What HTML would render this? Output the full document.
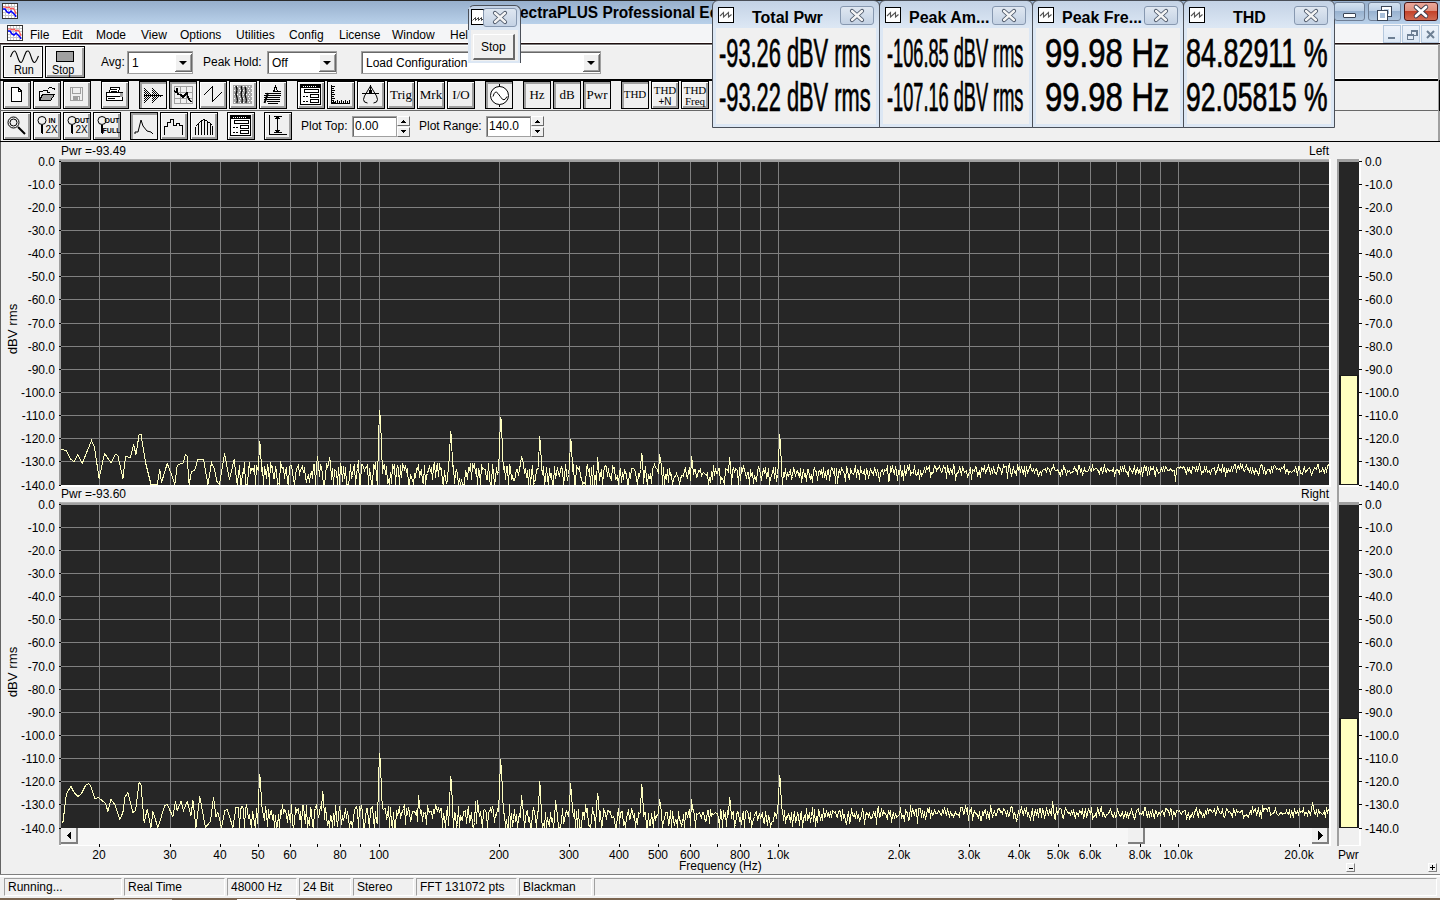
<!DOCTYPE html>
<html><head><meta charset="utf-8">
<style>
*{margin:0;padding:0;box-sizing:border-box}
html,body{width:1440px;height:900px;overflow:hidden;background:#f0f0f0;font-family:"Liberation Sans",sans-serif;font-size:12px;color:#000;position:relative}
.a{position:absolute}
.t{position:absolute;font-size:12px;line-height:14px;white-space:nowrap;color:#000}
.yl{left:0;width:55px;text-align:right}
.ml{left:1365px}
.tick{position:absolute;width:2px;height:1px;background:#000}
.rot{left:-17px;width:60px;text-align:center;transform:rotate(-90deg) scaleX(1.1);transform-origin:50% 50%}
.xl{top:848px;width:80px;text-align:center}
.xt{position:absolute;top:844px;width:1px;height:3px;background:#000}
/* title */
#title{left:0;top:0;width:1440px;height:24px;background:linear-gradient(#97afcc,#b9d1ea);border-top:1px solid #2a2a2a}
#menu{left:0;top:24px;width:1440px;height:22px;background:#f4f5f7;box-shadow:inset 0 -1px 0 #fff,inset 0 -2px 0 #7a7a7a,inset 0 -3px 0 #201010,inset 0 -4px 0 #fff}
.mi{position:absolute;top:28px;font-size:12px;line-height:14px;color:#000}
/* toolbar */
.btn{position:absolute;width:28px;height:28px;border:1px solid #000;background:#f0f0f0;box-shadow:inset 1px 1px 0 #fff,inset -1px -1px 0 #a0a0a0,inset -2px -2px 0 #a0a0a0}
.btn.dn{box-shadow:inset 1px 1px 0 #a0a0a0,inset 2px 2px 0 #a0a0a0}
.btn svg{position:absolute;left:-1px;top:-1px}
.sep{position:absolute;left:0;height:1px;background:#000}
.combo{position:absolute;background:#fff;border:1px solid #a0a0a0;box-shadow:inset 1px 1px 0 #696969}
.dd{position:absolute;width:17px;height:18px;background:#f0f0f0;border-right:1px solid #696969;border-bottom:1px solid #696969;box-shadow:inset 1px 1px 0 #fff,inset -1px -1px 0 #a0a0a0}
.dd:after{content:"";position:absolute;left:4px;top:7px;border-left:4px solid transparent;border-right:4px solid transparent;border-top:4px solid #000}
.tb{font-family:"Liberation Serif",serif;font-size:13px;line-height:14px;text-align:center;width:26px;position:absolute;left:0;top:6px}
/* meter windows */
.mw{position:absolute;top:0;height:128px;border:1px solid #4a4f58;border-top-left-radius:6px;border-top-right-radius:6px;background:linear-gradient(#c3d2e5,#dce7f4 26px,#dce7f4)}
.mw .cont{position:absolute;left:3px;top:27px;right:3px;bottom:3px;background:#f0f0f0}
.mw .ico{position:absolute;left:5px;top:6px;width:16px;height:16px;background:#fff;border:1px solid #000}
.mw .ttl{position:absolute;top:8px;font-weight:bold;font-size:16px;line-height:18px}
.mw .cls{position:absolute;top:5px;width:34px;height:19px;border:1px solid #8798b0;border-radius:3px;background:linear-gradient(#dfe7f1,#c4d2e4)}
.zz{position:absolute;left:0;top:0}
.mv{position:absolute;font-size:40px;line-height:40px;transform-origin:0 0;white-space:nowrap;-webkit-text-stroke:0.7px #000}
.spin{width:13px;height:21px;background:#f0f0f0}
.spin:before{content:"";position:absolute;left:0;top:0;width:13px;height:10px;box-sizing:border-box;border-top:1px solid #fff;border-left:1px solid #fff;border-right:1px solid #696969;border-bottom:1px solid #696969}
.spin:after{content:"";position:absolute;left:0;top:11px;width:13px;height:10px;box-sizing:border-box;border-top:1px solid #fff;border-left:1px solid #fff;border-right:1px solid #696969;border-bottom:1px solid #696969}
.sp{position:absolute;border-top:1px solid #a0a0a0;border-left:1px solid #a0a0a0;border-bottom:1px solid #fff;border-right:1px solid #fff;height:18px;top:878px}
.sp span{position:absolute;left:3px;top:1px;font-size:12px;line-height:14px}
</style></head><body>

<!-- Title bar -->
<div id="title" class="a"></div>
<svg class="a" style="left:2px;top:3px" width="16" height="16" shape-rendering="crispEdges"><rect x="0.5" y="0.5" width="15" height="15" fill="#fff" stroke="#333"/><path d="M3.5 1v14M6.5 1v14M9.5 1v14M12.5 1v14M1 3.5h14M1 6.5h14M1 9.5h14M1 12.5h14" stroke="#c8c8c8"/><polyline points="1,4 4,4 5,5 7,4 9,6 11,5 13,8 14,11" fill="none" stroke="#ff5050" stroke-width="1.2" shape-rendering="auto"/><polyline points="1,6 3,6 5,9 7,10 9,8 11,10 13,12 14,14" fill="none" stroke="#0000ff" stroke-width="1.5" shape-rendering="auto"/></svg>
<div class="a" style="left:520px;top:4px;font-weight:bold;font-size:16px;line-height:18px;white-space:nowrap;transform:scaleX(0.965);transform-origin:0 0;color:#000">ectraPLUS Professional Edition</div>

<!-- Menu -->
<div id="menu" class="a"></div>
<svg class="a" style="left:7px;top:25px" width="16" height="16" shape-rendering="crispEdges"><rect x="0.5" y="0.5" width="15" height="15" fill="#fff" stroke="#333"/><path d="M3.5 1v14M6.5 1v14M9.5 1v14M12.5 1v14M1 3.5h14M1 6.5h14M1 9.5h14M1 12.5h14" stroke="#c8c8c8"/><polyline points="1,4 4,4 5,5 7,4 9,6 11,5 13,8 14,11" fill="none" stroke="#ff5050" stroke-width="1.2" shape-rendering="auto"/><polyline points="1,6 3,6 5,9 7,10 9,8 11,10 13,12 14,14" fill="none" stroke="#0000ff" stroke-width="1.5" shape-rendering="auto"/></svg>
<div class="mi" style="left:30px">File</div>
<div class="mi" style="left:62px">Edit</div>
<div class="mi" style="left:96px">Mode</div>
<div class="mi" style="left:141px">View</div>
<div class="mi" style="left:180px">Options</div>
<div class="mi" style="left:236px">Utilities</div>
<div class="mi" style="left:289px">Config</div>
<div class="mi" style="left:339px">License</div>
<div class="mi" style="left:392px">Window</div>
<div class="mi" style="left:450px">Help</div>

<!-- toolbar rows -->
<div class="a" style="left:0;top:44px;width:1px;height:98px;background:#5a5a5a"></div>
<div class="sep" style="top:79px;width:1440px;height:2px"></div><div class="sep" style="top:78px;left:1334px;width:106px;background:#fff"></div>
<div class="sep" style="top:110px;width:1440px;background:#696969"></div><div class="a" style="left:1438px;top:44px;width:2px;height:98px;background:#a0a0a0"></div><div class="a" style="left:1439px;top:80px;width:1px;height:31px;background:#000"></div>
<div class="sep" style="top:141px;width:1440px;height:1px"></div>

<!-- row1 -->
<div class="btn" style="left:3px;top:46px;width:40px;height:32px;box-shadow:inset -1px -1px 0 #fff,inset 1px 1px 0 #fff"></div>
<div class="btn" style="left:45px;top:46px;width:40px;height:32px"></div>
<div class="t" style="left:14px;top:63px;font-size:12px;transform:scaleX(0.9);transform-origin:0 0"><u style="text-decoration:none;border-bottom:1px solid #000">R</u>un</div>
<div class="t" style="left:52px;top:63px;font-size:12px;transform:scaleX(0.9);transform-origin:0 0"><u style="text-decoration:none;border-bottom:1px solid #000">S</u>top</div>
<div class="a" style="left:56px;top:51px;width:18px;height:11px;background:#a0a0a0;border:1px solid #000"></div>
<svg class="a" style="left:0;top:44px" width="50" height="30"><path d="M10.5 13C12 9 13 7 14.5 7S17 11 18 14 19.5 18.5 21 18.5 23.5 14 25 10.5 26.5 7 28 7 30.5 11 31.5 14 33 18.5 34.5 18.5 37 15 38.5 12" fill="none" stroke="#000" stroke-width="1.1"/></svg>

<div class="t" style="left:101px;top:55px">Avg:</div>
<div class="combo" style="left:127px;top:51px;width:66px;height:23px"><span class="t" style="left:4px;top:4px">1</span><div class="dd" style="left:47px;top:2px"></div></div>
<div class="t" style="left:203px;top:55px">Peak Hold:</div>
<div class="combo" style="left:267px;top:51px;width:70px;height:23px"><span class="t" style="left:4px;top:4px">Off</span><div class="dd" style="left:51px;top:2px"></div></div>
<div class="combo" style="left:361px;top:51px;width:240px;height:23px"><span class="t" style="left:4px;top:4px">Load Configuration</span><div class="dd" style="left:221px;top:2px"></div></div>

<!-- row2 buttons -->
<div class="btn" style="left:3px;top:81px"><svg width="28" height="28" style="position:absolute;left:-1px;top:-1px" shape-rendering="crispEdges"><path d="M8.5 6.5h6.5l3.5 3.5v10.5h-10z" fill="#fff" stroke="#000"/><path d="M15 6.5v3.5h3.5" fill="none" stroke="#000"/></svg></div>
<div class="btn" style="left:33px;top:81px"><svg width="28" height="28" style="position:absolute;left:-1px;top:-1px" shape-rendering="crispEdges"><path d="M6.5 19.5v-9h3l1-1h4v2h2" fill="none" stroke="#000"/><path d="M6.5 19.5l3-6h12l-4 6z" fill="#a0a0a0" stroke="#000"/><path d="M14.5 8.5q3-4 6 0" fill="none" stroke="#000"/><path d="M19 7h3v3z" fill="#000"/></svg></div>
<div class="btn" style="left:63px;top:81px"><svg width="28" height="28" style="position:absolute;left:-1px;top:-1px" shape-rendering="crispEdges"><path d="M7.5 6.5h12v13h-12z" fill="none" stroke="#a0a0a0"/><rect x="9.5" y="6.5" width="8" height="6" fill="none" stroke="#a0a0a0"/><rect x="10" y="15" width="7" height="5" fill="#a0a0a0"/><rect x="15" y="16" width="1" height="3" fill="#f0f0f0"/></svg></div>
<div class="btn" style="left:101px;top:81px"><svg width="28" height="28" style="position:absolute;left:-1px;top:-1px" shape-rendering="crispEdges"><path d="M9.5 6.5h9l-1 5h-9z" fill="#fff" stroke="#000"/><path d="M10 8.5h6M10 10h6" stroke="#000"/><rect x="5.5" y="11.5" width="16" height="4" rx="1" fill="#fff" stroke="#000"/><rect x="5.5" y="15.5" width="16" height="4" rx="1" fill="#fff" stroke="#000"/><path d="M7 17.5h7" stroke="#000"/><rect x="19" y="12" width="3" height="4" fill="#a0a0a0"/></svg></div>
<div class="btn dn" style="left:139px;top:81px"><svg width="28" height="28" style="position:absolute;left:-1px;top:-1px" shape-rendering="crispEdges"><rect x="5" y="7" width="1" height="1" fill="#000"/><rect x="13" y="7" width="1" height="1" fill="#000"/><rect x="6" y="8" width="1" height="1" fill="#000"/><rect x="14" y="8" width="1" height="1" fill="#000"/><rect x="5" y="9" width="1" height="1" fill="#000"/><rect x="7" y="9" width="1" height="1" fill="#000"/><rect x="13" y="9" width="1" height="1" fill="#000"/><rect x="15" y="9" width="1" height="1" fill="#000"/><rect x="6" y="10" width="1" height="1" fill="#000"/><rect x="8" y="10" width="1" height="1" fill="#000"/><rect x="14" y="10" width="1" height="1" fill="#000"/><rect x="16" y="10" width="1" height="1" fill="#000"/><rect x="5" y="11" width="1" height="1" fill="#000"/><rect x="7" y="11" width="1" height="1" fill="#000"/><rect x="9" y="11" width="1" height="1" fill="#000"/><rect x="13" y="11" width="1" height="1" fill="#000"/><rect x="15" y="11" width="1" height="1" fill="#000"/><rect x="17" y="11" width="1" height="1" fill="#000"/><rect x="6" y="12" width="1" height="1" fill="#000"/><rect x="8" y="12" width="1" height="1" fill="#000"/><rect x="10" y="12" width="1" height="1" fill="#000"/><rect x="14" y="12" width="1" height="1" fill="#000"/><rect x="16" y="12" width="1" height="1" fill="#000"/><rect x="18" y="12" width="1" height="1" fill="#000"/><rect x="5" y="13" width="1" height="1" fill="#000"/><rect x="7" y="13" width="1" height="1" fill="#000"/><rect x="9" y="13" width="1" height="1" fill="#000"/><rect x="11" y="13" width="1" height="1" fill="#000"/><rect x="13" y="13" width="1" height="1" fill="#000"/><rect x="15" y="13" width="1" height="1" fill="#000"/><rect x="17" y="13" width="1" height="1" fill="#000"/><rect x="19" y="13" width="1" height="1" fill="#000"/><rect x="6" y="14" width="1" height="1" fill="#000"/><rect x="8" y="14" width="1" height="1" fill="#000"/><rect x="10" y="14" width="1" height="1" fill="#000"/><rect x="12" y="14" width="1" height="1" fill="#000"/><rect x="14" y="14" width="1" height="1" fill="#000"/><rect x="16" y="14" width="1" height="1" fill="#000"/><rect x="18" y="14" width="1" height="1" fill="#000"/><rect x="20" y="14" width="1" height="1" fill="#000"/><rect x="5" y="15" width="1" height="1" fill="#000"/><rect x="7" y="15" width="1" height="1" fill="#000"/><rect x="9" y="15" width="1" height="1" fill="#000"/><rect x="11" y="15" width="1" height="1" fill="#000"/><rect x="13" y="15" width="1" height="1" fill="#000"/><rect x="15" y="15" width="1" height="1" fill="#000"/><rect x="17" y="15" width="1" height="1" fill="#000"/><rect x="19" y="15" width="1" height="1" fill="#000"/><rect x="21" y="15" width="1" height="1" fill="#000"/><rect x="6" y="16" width="1" height="1" fill="#000"/><rect x="8" y="16" width="1" height="1" fill="#000"/><rect x="10" y="16" width="1" height="1" fill="#000"/><rect x="14" y="16" width="1" height="1" fill="#000"/><rect x="16" y="16" width="1" height="1" fill="#000"/><rect x="18" y="16" width="1" height="1" fill="#000"/><rect x="5" y="17" width="1" height="1" fill="#000"/><rect x="7" y="17" width="1" height="1" fill="#000"/><rect x="9" y="17" width="1" height="1" fill="#000"/><rect x="13" y="17" width="1" height="1" fill="#000"/><rect x="15" y="17" width="1" height="1" fill="#000"/><rect x="17" y="17" width="1" height="1" fill="#000"/><rect x="6" y="18" width="1" height="1" fill="#000"/><rect x="8" y="18" width="1" height="1" fill="#000"/><rect x="14" y="18" width="1" height="1" fill="#000"/><rect x="16" y="18" width="1" height="1" fill="#000"/><rect x="5" y="19" width="1" height="1" fill="#000"/><rect x="7" y="19" width="1" height="1" fill="#000"/><rect x="13" y="19" width="1" height="1" fill="#000"/><rect x="15" y="19" width="1" height="1" fill="#000"/><rect x="6" y="20" width="1" height="1" fill="#000"/><rect x="14" y="20" width="1" height="1" fill="#000"/><rect x="5" y="21" width="1" height="1" fill="#000"/><rect x="13" y="21" width="1" height="1" fill="#000"/><path d="M5 14.5h19" stroke="#000"/></svg></div>
<div class="btn dn" style="left:169px;top:81px"><svg width="28" height="28" style="position:absolute;left:-1px;top:-1px" shape-rendering="crispEdges"><rect x="5.5" y="5.5" width="18" height="17" fill="none" stroke="#a0a0a0"/><path d="M11.5 5.5v17M17.5 5.5v17M5.5 11.5h18M5.5 17.5h18" stroke="#a0a0a0"/><polyline points="5,10 7,11 8,8 9,13 12,14 14,16 16,14 18,12 19,16 20,18 22,21" fill="none" stroke="#000" stroke-width="1.5"/></svg></div>
<div class="btn" style="left:199px;top:81px"><svg width="28" height="28" style="position:absolute;left:-1px;top:-1px" shape-rendering="crispEdges"><polyline points="4.5,14.5 13.5,5.5 13.5,20.5 22.5,11.5" fill="none" stroke="#000" stroke-width="1"/></svg></div>
<div class="btn" style="left:229px;top:81px"><svg width="28" height="28" style="position:absolute;left:-1px;top:-1px" shape-rendering="crispEdges"><rect x="4" y="4" width="19" height="19" fill="#a8a8a8"/><rect x="5" y="5" width="1" height="1" fill="#fff"/><rect x="8" y="5" width="1" height="1" fill="#fff"/><rect x="11" y="5" width="1" height="1" fill="#fff"/><rect x="14" y="5" width="1" height="1" fill="#fff"/><rect x="17" y="5" width="1" height="1" fill="#fff"/><rect x="20" y="5" width="1" height="1" fill="#fff"/><rect x="7" y="7" width="1" height="1" fill="#fff"/><rect x="10" y="7" width="1" height="1" fill="#fff"/><rect x="13" y="7" width="1" height="1" fill="#fff"/><rect x="16" y="7" width="1" height="1" fill="#fff"/><rect x="19" y="7" width="1" height="1" fill="#fff"/><rect x="22" y="7" width="1" height="1" fill="#fff"/><rect x="5" y="9" width="1" height="1" fill="#fff"/><rect x="8" y="9" width="1" height="1" fill="#fff"/><rect x="11" y="9" width="1" height="1" fill="#fff"/><rect x="14" y="9" width="1" height="1" fill="#fff"/><rect x="17" y="9" width="1" height="1" fill="#fff"/><rect x="20" y="9" width="1" height="1" fill="#fff"/><rect x="7" y="11" width="1" height="1" fill="#fff"/><rect x="10" y="11" width="1" height="1" fill="#fff"/><rect x="13" y="11" width="1" height="1" fill="#fff"/><rect x="16" y="11" width="1" height="1" fill="#fff"/><rect x="19" y="11" width="1" height="1" fill="#fff"/><rect x="22" y="11" width="1" height="1" fill="#fff"/><rect x="5" y="13" width="1" height="1" fill="#fff"/><rect x="8" y="13" width="1" height="1" fill="#fff"/><rect x="11" y="13" width="1" height="1" fill="#fff"/><rect x="14" y="13" width="1" height="1" fill="#fff"/><rect x="17" y="13" width="1" height="1" fill="#fff"/><rect x="20" y="13" width="1" height="1" fill="#fff"/><rect x="7" y="15" width="1" height="1" fill="#fff"/><rect x="10" y="15" width="1" height="1" fill="#fff"/><rect x="13" y="15" width="1" height="1" fill="#fff"/><rect x="16" y="15" width="1" height="1" fill="#fff"/><rect x="19" y="15" width="1" height="1" fill="#fff"/><rect x="22" y="15" width="1" height="1" fill="#fff"/><rect x="5" y="17" width="1" height="1" fill="#fff"/><rect x="8" y="17" width="1" height="1" fill="#fff"/><rect x="11" y="17" width="1" height="1" fill="#fff"/><rect x="14" y="17" width="1" height="1" fill="#fff"/><rect x="17" y="17" width="1" height="1" fill="#fff"/><rect x="20" y="17" width="1" height="1" fill="#fff"/><rect x="7" y="19" width="1" height="1" fill="#fff"/><rect x="10" y="19" width="1" height="1" fill="#fff"/><rect x="13" y="19" width="1" height="1" fill="#fff"/><rect x="16" y="19" width="1" height="1" fill="#fff"/><rect x="19" y="19" width="1" height="1" fill="#fff"/><rect x="22" y="19" width="1" height="1" fill="#fff"/><rect x="5" y="21" width="1" height="1" fill="#fff"/><rect x="8" y="21" width="1" height="1" fill="#fff"/><rect x="11" y="21" width="1" height="1" fill="#fff"/><rect x="14" y="21" width="1" height="1" fill="#fff"/><rect x="17" y="21" width="1" height="1" fill="#fff"/><rect x="20" y="21" width="1" height="1" fill="#fff"/><path d="M7 5q2 4 0 8q2 5 1 9M12 5q2 4 0 8q2 5 1 9M16 6q2 4 0 8q2 4 1 8" fill="none" stroke="#000" stroke-width="1.3" shape-rendering="auto"/></svg></div>
<div class="btn" style="left:259px;top:81px"><svg width="28" height="28" style="position:absolute;left:-1px;top:-1px" shape-rendering="crispEdges"><path d="M15 10.5h7M6 12.5h16M5 14.5h17M5 16.5h16M5 18.5h16M8 20.5h13M9 22.5h10" stroke="#000"/><polyline points="14.5,11 16.5,5 18.5,10.5" fill="none" stroke="#000"/><path d="M9 12L5.5 22" stroke="#000" stroke-width="2" shape-rendering="auto"/></svg></div>
<div class="btn" style="left:297px;top:81px"><svg width="28" height="28" style="position:absolute;left:-1px;top:-1px" shape-rendering="crispEdges"><rect x="3.5" y="3.5" width="20" height="20" fill="#fff" stroke="#000"/><rect x="4" y="4" width="19" height="3" fill="#000"/><path d="M6 5.5h13" stroke="#fff" stroke-dasharray="1 1"/><rect x="7.5" y="8.5" width="14" height="3" fill="none" stroke="#000"/><rect x="13.5" y="13.5" width="8" height="3" fill="none" stroke="#000"/><rect x="13.5" y="18.5" width="8" height="3" fill="none" stroke="#000"/><path d="M6 15h2M9 15h2M6 20h2M9 20h2" stroke="#000"/></svg></div>
<div class="btn" style="left:327px;top:81px"><svg width="28" height="28" style="position:absolute;left:-1px;top:-1px" shape-rendering="crispEdges"><path d="M4.5 4v18.5h18" fill="none" stroke="#000"/><path d="M5 5.5h3" stroke="#000"/><path d="M5 7.5h2" stroke="#000"/><path d="M5 9.5h3" stroke="#000"/><path d="M5 11.5h2" stroke="#000"/><path d="M5 13.5h3" stroke="#000"/><path d="M5 15.5h2" stroke="#000"/><path d="M5 17.5h3" stroke="#000"/><path d="M5 19.5h2" stroke="#000"/><path d="M5 21.5h3" stroke="#000"/><path d="M6.5 22v-3" stroke="#000"/><path d="M8.5 22v-2" stroke="#000"/><path d="M10.5 22v-3" stroke="#000"/><path d="M12.5 22v-2" stroke="#000"/><path d="M14.5 22v-3" stroke="#000"/><path d="M16.5 22v-2" stroke="#000"/><path d="M18.5 22v-3" stroke="#000"/><path d="M20.5 22v-2" stroke="#000"/><path d="M22.5 22v-3" stroke="#000"/></svg></div>
<div class="btn" style="left:357px;top:81px"><svg width="28" height="28" style="position:absolute;left:-1px;top:-1px" shape-rendering="crispEdges"><path d="M13.5 3.5v9M5 12.5h17" stroke="#000" fill="none"/><path d="M13.5 5l-6 10q-2 4 0 6l3 1M13.5 5l6 10q2 4 0 6l-3 1" fill="none" stroke="#000" shape-rendering="auto"/><rect x="12" y="9" width="3" height="3" fill="#000"/></svg></div>
<div class="btn" style="left:387px;top:81px"></div>
<div class="btn" style="left:417px;top:81px"></div>
<div class="btn" style="left:447px;top:81px"></div>
<div class="btn dn" style="left:485px;top:81px"><svg width="28" height="28" style="position:absolute;left:-1px;top:-1px" shape-rendering="crispEdges"><circle cx="14.5" cy="14.5" r="9" fill="#fff" stroke="#000" shape-rendering="auto"/><path d="M14.5 3v2.5M14.5 23.5v2.5" stroke="#000"/><path d="M8 15.5q2-7 5-3t3 4q3 5 6-1" fill="none" stroke="#000" shape-rendering="auto"/></svg></div>
<div class="btn dn" style="left:523px;top:81px"></div>
<div class="btn dn" style="left:553px;top:81px"></div>
<div class="btn dn" style="left:583px;top:81px"></div>
<div class="btn dn" style="left:621px;top:81px"></div>
<div class="btn" style="left:651px;top:81px"></div>
<div class="btn" style="left:681px;top:81px"></div>
<div class="a" style="left:387px;top:81px;width:28px;height:28px;font-family:'Liberation Serif',serif;font-size:13px;line-height:13px;text-align:center;padding-top:7px;white-space:nowrap">Trig</div>
<div class="a" style="left:417px;top:81px;width:28px;height:28px;font-family:'Liberation Serif',serif;font-size:13px;line-height:13px;text-align:center;padding-top:7px;white-space:nowrap">Mrk</div>
<div class="a" style="left:447px;top:81px;width:28px;height:28px;font-family:'Liberation Serif',serif;font-size:13px;line-height:13px;text-align:center;padding-top:7px;white-space:nowrap">I/O</div>
<div class="a" style="left:523px;top:81px;width:28px;height:28px;font-family:'Liberation Serif',serif;font-size:13px;line-height:13px;text-align:center;padding-top:7px;white-space:nowrap">Hz</div>
<div class="a" style="left:553px;top:81px;width:28px;height:28px;font-family:'Liberation Serif',serif;font-size:13px;line-height:13px;text-align:center;padding-top:7px;white-space:nowrap">dB</div>
<div class="a" style="left:583px;top:81px;width:28px;height:28px;font-family:'Liberation Serif',serif;font-size:13px;line-height:13px;text-align:center;padding-top:7px;white-space:nowrap">Pwr</div>
<div class="a" style="left:621px;top:81px;width:28px;height:28px;font-family:'Liberation Serif',serif;font-size:11px;line-height:11px;text-align:center;padding-top:8px;white-space:nowrap">THD</div>
<div class="a" style="left:651px;top:81px;width:28px;height:28px;font-family:'Liberation Serif',serif;font-size:11px;line-height:11px;text-align:center;padding-top:4px;white-space:nowrap">THD<br><span style='font-family:"Liberation Sans",sans-serif;font-size:10px'>+N</span></div>
<div class="a" style="left:681px;top:81px;width:28px;height:28px;font-family:'Liberation Serif',serif;font-size:11px;line-height:11px;text-align:center;padding-top:4px;white-space:nowrap">THD<br>Freq</div>
<!-- row3 -->
<div class="btn" style="left:3px;top:112px"><svg width="28" height="28" style="position:absolute;left:-1px;top:-1px" shape-rendering="crispEdges"><circle cx="10.5" cy="10.5" r="5.5" fill="none" stroke="#000" shape-rendering="auto"/><circle cx="10.5" cy="10.5" r="3.5" fill="none" stroke="#000" shape-rendering="auto"/><path d="M15 15l7 7" stroke="#000" stroke-width="2" shape-rendering="auto"/></svg></div>
<div class="btn" style="left:33px;top:112px"><svg width="28" height="28" style="position:absolute;left:-1px;top:-1px" shape-rendering="crispEdges"><circle cx="9" cy="8.5" r="4" fill="none" stroke="#000" shape-rendering="auto"/><path d="M8 13v8l1 1 1-1v-8z" fill="#000"/><text x="19" y="11" font-family="Liberation Sans" font-size="7" font-weight="bold" text-anchor="middle">IN</text><text x="18.5" y="21" font-family="Liberation Sans" font-size="10" text-anchor="middle" font-weight="normal">2X</text></svg></div>
<div class="btn" style="left:63px;top:112px"><svg width="28" height="28" style="position:absolute;left:-1px;top:-1px" shape-rendering="crispEdges"><circle cx="9" cy="8.5" r="4" fill="none" stroke="#000" shape-rendering="auto"/><path d="M8 13v8l1 1 1-1v-8z" fill="#000"/><text x="19" y="11" font-family="Liberation Sans" font-size="7" font-weight="bold" text-anchor="middle">OUT</text><text x="18.5" y="21" font-family="Liberation Sans" font-size="10" text-anchor="middle" font-weight="normal">2X</text></svg></div>
<div class="btn" style="left:93px;top:112px"><svg width="28" height="28" style="position:absolute;left:-1px;top:-1px" shape-rendering="crispEdges"><circle cx="9" cy="8.5" r="4" fill="none" stroke="#000" shape-rendering="auto"/><path d="M8 13v8l1 1 1-1v-8z" fill="#000"/><text x="19" y="11" font-family="Liberation Sans" font-size="7" font-weight="bold" text-anchor="middle">OUT</text><text x="18.5" y="21" font-family="Liberation Sans" font-size="7" text-anchor="middle" font-weight="bold">FULL</text></svg></div>
<div class="btn dn" style="left:130px;top:112px"><svg width="28" height="28" style="position:absolute;left:-1px;top:-1px" shape-rendering="crispEdges"><polyline points="5,22 5,20 8,20 11,8 13,14 17,19 21,20 23,22" fill="none" stroke="#000" stroke-width="1" shape-rendering="auto"/></svg></div>
<div class="btn" style="left:160px;top:112px"><svg width="28" height="28" style="position:absolute;left:-1px;top:-1px" shape-rendering="crispEdges"><polyline points="4.5,22.5 4.5,14.5 7.5,14.5 7.5,10.5 10.5,10.5 10.5,7.5 13.5,7.5 13.5,13.5 16.5,13.5 16.5,11.5 19.5,11.5 19.5,13.5 22.5,13.5 22.5,22.5" fill="none" stroke="#000"/></svg></div>
<div class="btn" style="left:190px;top:112px"><svg width="28" height="28" style="position:absolute;left:-1px;top:-1px" shape-rendering="crispEdges"><path d="M5.5 22.5V14.5" stroke="#000"/><path d="M8.5 22.5V11.5" stroke="#000"/><path d="M11.5 22.5V8.5" stroke="#000"/><path d="M14.5 22.5V7.5" stroke="#000"/><path d="M17.5 22.5V9.5" stroke="#000"/><path d="M20.5 22.5V11.5" stroke="#000"/><path d="M22.5 22.5V13.5" stroke="#000"/><polyline points="5.5,14.5 8.5,11.5 11.5,8.5 14.5,7.5 17.5,9.5 20.5,11.5 22.5,13.5" fill="none" stroke="#000"/></svg></div>
<div class="btn" style="left:227px;top:112px"><svg width="28" height="28" style="position:absolute;left:-1px;top:-1px" shape-rendering="crispEdges"><rect x="3.5" y="3.5" width="20" height="20" fill="#fff" stroke="#000"/><rect x="4" y="4" width="19" height="3" fill="#000"/><path d="M6 5.5h13" stroke="#fff" stroke-dasharray="1 1"/><rect x="7.5" y="8.5" width="14" height="3" fill="none" stroke="#000"/><rect x="13.5" y="13.5" width="8" height="3" fill="none" stroke="#000"/><rect x="13.5" y="18.5" width="8" height="3" fill="none" stroke="#000"/><path d="M6 15h2M9 15h2M6 20h2M9 20h2" stroke="#000"/></svg></div>
<div class="btn" style="left:264px;top:112px"><svg width="28" height="28" style="position:absolute;left:-1px;top:-1px" shape-rendering="crispEdges"><path d="M5.5 3v19.5h17" fill="none" stroke="#000"/><path d="M10 4.5h8M10 20.5h8M13.5 5v15" stroke="#000"/><path d="M11 7l2.5-3 2.5 3zM11 18l2.5 3 2.5-3z" fill="#000"/></svg></div>

<div class="t" style="left:301px;top:119px">Plot Top:</div>
<div class="combo" style="left:352px;top:116px;width:45px;height:21px"><span class="t" style="left:2px;top:2px">0.00</span></div>
<div class="a spin" style="left:397px;top:116px"></div>
<div class="t" style="left:419px;top:119px">Plot Range:</div>
<div class="combo" style="left:486px;top:116px;width:45px;height:21px"><span class="t" style="left:2px;top:2px">140.0</span></div>
<div class="a spin" style="left:531px;top:116px"></div>

<!-- Plot area frame -->
<div class="a" style="left:0;top:142px;width:1px;height:733px;background:#646464"></div>

<svg class="a" style="left:0;top:0" width="1440" height="900" shape-rendering="crispEdges">
<!-- upper borders -->
<rect x="59" y="159" width="1272" height="3" fill="#a0a0a0"/>
<rect x="59" y="159" width="1272" height="1" fill="#b4b4b4"/>
<rect x="59" y="159" width="2" height="327" fill="#a0a0a0"/>
<rect x="1329" y="159" width="2" height="328" fill="#fff"/>
<rect x="59" y="485" width="1272" height="2" fill="#fff"/>
<rect x="59" y="502" width="1272" height="3" fill="#a0a0a0"/>
<rect x="59" y="502" width="1272" height="1" fill="#b4b4b4"/>
<rect x="59" y="502" width="2" height="344" fill="#a0a0a0"/>
<rect x="1329" y="502" width="2" height="344" fill="#fff"/>
<rect x="61" y="162" width="1268" height="323" fill="#262626"/>
<rect x="61" y="184" width="1268" height="1" fill="#808080"/>
<rect x="61" y="207" width="1268" height="1" fill="#808080"/>
<rect x="61" y="230" width="1268" height="1" fill="#808080"/>
<rect x="61" y="253" width="1268" height="1" fill="#808080"/>
<rect x="61" y="276" width="1268" height="1" fill="#808080"/>
<rect x="61" y="299" width="1268" height="1" fill="#808080"/>
<rect x="61" y="323" width="1268" height="1" fill="#808080"/>
<rect x="61" y="346" width="1268" height="1" fill="#808080"/>
<rect x="61" y="369" width="1268" height="1" fill="#808080"/>
<rect x="61" y="392" width="1268" height="1" fill="#808080"/>
<rect x="61" y="415" width="1268" height="1" fill="#808080"/>
<rect x="61" y="438" width="1268" height="1" fill="#808080"/>
<rect x="61" y="461" width="1268" height="1" fill="#808080"/>
<rect x="99" y="162" width="1" height="323" fill="#808080"/>
<rect x="170" y="162" width="1" height="323" fill="#808080"/>
<rect x="220" y="162" width="1" height="323" fill="#808080"/>
<rect x="258" y="162" width="1" height="323" fill="#808080"/>
<rect x="290" y="162" width="1" height="323" fill="#808080"/>
<rect x="317" y="162" width="1" height="323" fill="#808080"/>
<rect x="340" y="162" width="1" height="323" fill="#808080"/>
<rect x="360" y="162" width="1" height="323" fill="#808080"/>
<rect x="379" y="162" width="1" height="323" fill="#808080"/>
<rect x="499" y="162" width="1" height="323" fill="#808080"/>
<rect x="569" y="162" width="1" height="323" fill="#808080"/>
<rect x="619" y="162" width="1" height="323" fill="#808080"/>
<rect x="658" y="162" width="1" height="323" fill="#808080"/>
<rect x="690" y="162" width="1" height="323" fill="#808080"/>
<rect x="717" y="162" width="1" height="323" fill="#808080"/>
<rect x="740" y="162" width="1" height="323" fill="#808080"/>
<rect x="760" y="162" width="1" height="323" fill="#808080"/>
<rect x="778" y="162" width="1" height="323" fill="#808080"/>
<rect x="899" y="162" width="1" height="323" fill="#808080"/>
<rect x="969" y="162" width="1" height="323" fill="#808080"/>
<rect x="1019" y="162" width="1" height="323" fill="#808080"/>
<rect x="1058" y="162" width="1" height="323" fill="#808080"/>
<rect x="1090" y="162" width="1" height="323" fill="#808080"/>
<rect x="1116" y="162" width="1" height="323" fill="#808080"/>
<rect x="1140" y="162" width="1" height="323" fill="#808080"/>
<rect x="1160" y="162" width="1" height="323" fill="#808080"/>
<rect x="1178" y="162" width="1" height="323" fill="#808080"/>
<rect x="1299" y="162" width="1" height="323" fill="#808080"/>
<polyline points="61.5,449.5 66.0,450.5 71.0,459.5 74.1,461.5 77.9,454.5 82.2,463.5 91.5,440.5 94.5,447.5 99.1,478.5 104.5,453.5 111.0,462.5 115.5,454.5 117.9,455.5 122.9,478.5 125.5,456.5 130.5,457.5 133.5,444.5 136.0,454.5 139.1,434.5 141.0,434.5 146.0,464.5 151.0,484.5 157.2,484.5 159.8,469.5 161.5,482.5 167.2,463.5 171.5,474.5 174.8,484.5 177.2,465.5 180.5,463.5 182.9,463.5 185.5,454.5 187.2,456.5 189.1,484.5 191.5,471.5 194.5,470.5 197.9,459.5 203.5,459.5 207.9,484.5 211.5,462.5 214.5,469.5 217.2,482.5 219.5,484.5 224.5,453.5 229.5,479.5 234.1,459.5 237.2,484.5 239.5,465.5 240.5,484.5 241.5,484.5 242.5,472.5 243.5,473.5 244.5,462.5 245.5,484.5 246.5,484.5 247.5,484.5 248.5,469.5 249.5,462.5 250.5,473.5 251.5,468.5 252.5,468.5 253.5,471.5 254.5,465.5 255.5,484.5 256.5,466.5 257.5,468.5 258.5,470.5 259.5,441.5 260.5,445.5 261.5,471.5 262.5,467.5 263.5,484.5 264.5,466.5 265.5,471.5 266.5,478.5 267.5,464.5 268.5,468.5 269.5,484.5 270.5,462.5 271.5,467.5 272.5,466.5 273.5,478.5 274.5,478.5 275.5,466.5 276.5,470.5 277.5,484.5 278.5,483.5 279.5,484.5 280.5,461.5 281.5,466.5 282.5,468.5 283.5,467.5 284.5,478.5 285.5,470.5 286.5,467.5 287.5,483.5 288.5,484.5 289.5,466.5 290.5,465.5 291.5,465.5 292.5,471.5 293.5,479.5 294.5,484.5 295.5,475.5 296.5,468.5 297.5,467.5 298.5,464.5 299.5,475.5 300.5,469.5 301.5,468.5 302.5,466.5 303.5,472.5 304.5,467.5 305.5,478.5 306.5,481.5 307.5,477.5 308.5,475.5 309.5,482.5 310.5,474.5 311.5,471.5 312.5,478.5 313.5,464.5 314.5,464.5 315.5,484.5 316.5,466.5 317.5,456.5 318.5,465.5 319.5,476.5 320.5,464.5 321.5,467.5 322.5,474.5 323.5,484.5 324.5,484.5 325.5,476.5 326.5,463.5 327.5,466.5 328.5,464.5 329.5,457.5 330.5,461.5 331.5,479.5 332.5,468.5 333.5,484.5 334.5,469.5 335.5,470.5 336.5,471.5 337.5,484.5 338.5,467.5 339.5,484.5 340.5,463.5 341.5,468.5 342.5,481.5 343.5,466.5 344.5,478.5 345.5,467.5 346.5,484.5 347.5,484.5 348.5,484.5 349.5,478.5 350.5,464.5 351.5,478.5 352.5,475.5 353.5,467.5 354.5,465.5 355.5,484.5 356.5,474.5 357.5,468.5 358.5,460.5 359.5,484.5 360.5,484.5 361.5,464.5 362.5,464.5 363.5,467.5 364.5,470.5 365.5,467.5 366.5,467.5 367.5,464.5 368.5,484.5 369.5,468.5 370.5,474.5 371.5,484.5 372.5,484.5 373.5,465.5 374.5,467.5 375.5,462.5 376.5,477.5 377.5,484.5 378.5,439.5 379.5,410.5 380.5,419.5 381.5,445.5 382.5,473.5 383.5,465.5 384.5,464.5 385.5,474.5 386.5,466.5 387.5,483.5 388.5,480.5 389.5,484.5 390.5,472.5 391.5,483.5 392.5,464.5 393.5,468.5 394.5,464.5 395.5,484.5 396.5,469.5 397.5,466.5 398.5,468.5 399.5,484.5 400.5,465.5 401.5,477.5 402.5,464.5 403.5,466.5 404.5,469.5 405.5,465.5 406.5,471.5 407.5,469.5 408.5,484.5 409.5,484.5 410.5,474.5 411.5,478.5 412.5,479.5 413.5,484.5 414.5,473.5 415.5,477.5 416.5,468.5 417.5,469.5 418.5,464.5 419.5,477.5 420.5,472.5 421.5,469.5 422.5,482.5 423.5,483.5 424.5,465.5 425.5,484.5 426.5,475.5 427.5,473.5 428.5,469.5 429.5,466.5 430.5,471.5 431.5,467.5 432.5,479.5 433.5,466.5 434.5,462.5 435.5,477.5 436.5,466.5 437.5,464.5 438.5,476.5 439.5,463.5 440.5,469.5 441.5,468.5 442.5,482.5 443.5,484.5 444.5,470.5 445.5,478.5 446.5,483.5 447.5,479.5 448.5,465.5 449.5,456.5 450.5,431.5 451.5,435.5 452.5,466.5 453.5,465.5 454.5,483.5 455.5,473.5 456.5,469.5 457.5,474.5 458.5,484.5 459.5,478.5 460.5,484.5 461.5,479.5 462.5,484.5 463.5,484.5 464.5,484.5 465.5,470.5 466.5,474.5 467.5,479.5 468.5,467.5 469.5,470.5 470.5,463.5 471.5,479.5 472.5,464.5 473.5,466.5 474.5,464.5 475.5,473.5 476.5,468.5 477.5,484.5 478.5,468.5 479.5,471.5 480.5,484.5 481.5,464.5 482.5,469.5 483.5,468.5 484.5,469.5 485.5,469.5 486.5,479.5 487.5,479.5 488.5,463.5 489.5,478.5 490.5,484.5 491.5,484.5 492.5,464.5 493.5,473.5 494.5,484.5 495.5,479.5 496.5,467.5 497.5,474.5 498.5,471.5 499.5,447.5 500.5,417.5 501.5,420.5 502.5,454.5 503.5,469.5 504.5,466.5 505.5,479.5 506.5,466.5 507.5,466.5 508.5,484.5 509.5,465.5 510.5,467.5 511.5,479.5 512.5,476.5 513.5,480.5 514.5,480.5 515.5,475.5 516.5,469.5 517.5,469.5 518.5,475.5 519.5,468.5 520.5,464.5 521.5,456.5 522.5,459.5 523.5,464.5 524.5,473.5 525.5,468.5 526.5,477.5 527.5,470.5 528.5,484.5 529.5,469.5 530.5,484.5 531.5,473.5 532.5,465.5 533.5,484.5 534.5,482.5 535.5,478.5 536.5,469.5 537.5,469.5 538.5,467.5 539.5,436.5 540.5,443.5 541.5,466.5 542.5,474.5 543.5,466.5 544.5,484.5 545.5,479.5 546.5,467.5 547.5,478.5 548.5,484.5 549.5,468.5 550.5,476.5 551.5,474.5 552.5,484.5 553.5,484.5 554.5,466.5 555.5,478.5 556.5,473.5 557.5,467.5 558.5,473.5 559.5,476.5 560.5,469.5 561.5,467.5 562.5,469.5 563.5,484.5 564.5,477.5 565.5,464.5 566.5,473.5 567.5,480.5 568.5,474.5 569.5,466.5 570.5,439.5 571.5,442.5 572.5,471.5 573.5,464.5 574.5,484.5 575.5,484.5 576.5,466.5 577.5,468.5 578.5,469.5 579.5,466.5 580.5,477.5 581.5,477.5 582.5,484.5 583.5,482.5 584.5,482.5 585.5,484.5 586.5,467.5 587.5,465.5 588.5,471.5 589.5,468.5 590.5,484.5 591.5,467.5 592.5,484.5 593.5,465.5 594.5,484.5 595.5,475.5 596.5,484.5 597.5,457.5 598.5,465.5 599.5,480.5 600.5,474.5 601.5,469.5 602.5,484.5 603.5,474.5 604.5,466.5 605.5,465.5 606.5,467.5 607.5,476.5 608.5,468.5 609.5,476.5 610.5,476.5 611.5,480.5 612.5,465.5 613.5,468.5 614.5,467.5 615.5,479.5 616.5,478.5 617.5,476.5 618.5,484.5 619.5,471.5 620.5,469.5 621.5,482.5 622.5,472.5 623.5,479.5 624.5,469.5 625.5,473.5 626.5,473.5 627.5,484.5 628.5,484.5 629.5,472.5 630.5,478.5 631.5,468.5 632.5,468.5 633.5,468.5 634.5,469.5 635.5,472.5 636.5,478.5 637.5,484.5 638.5,473.5 639.5,476.5 640.5,469.5 641.5,453.5 642.5,456.5 643.5,483.5 644.5,473.5 645.5,466.5 646.5,478.5 647.5,484.5 648.5,474.5 649.5,478.5 650.5,473.5 651.5,483.5 652.5,468.5 653.5,467.5 654.5,464.5 655.5,467.5 656.5,468.5 657.5,469.5 658.5,473.5 659.5,454.5 660.5,459.5 661.5,465.5 662.5,484.5 663.5,467.5 664.5,484.5 665.5,474.5 666.5,479.5 667.5,469.5 668.5,482.5 669.5,468.5 670.5,475.5 671.5,474.5 672.5,484.5 673.5,479.5 674.5,476.5 675.5,476.5 676.5,473.5 677.5,476.5 678.5,477.5 679.5,484.5 680.5,479.5 681.5,475.5 682.5,475.5 683.5,476.5 684.5,470.5 685.5,468.5 686.5,474.5 687.5,478.5 688.5,472.5 689.5,467.5 690.5,480.5 691.5,456.5 692.5,463.5 693.5,474.5 694.5,469.5 695.5,469.5 696.5,477.5 697.5,476.5 698.5,470.5 699.5,471.5 700.5,469.5 701.5,475.5 702.5,473.5 703.5,472.5 704.5,473.5 705.5,474.5 706.5,475.5 707.5,473.5 708.5,484.5 709.5,477.5 710.5,482.5 711.5,471.5 712.5,479.5 713.5,465.5 714.5,475.5 715.5,468.5 716.5,473.5 717.5,473.5 718.5,468.5 719.5,468.5 720.5,483.5 721.5,477.5 722.5,478.5 723.5,481.5 724.5,484.5 725.5,468.5 726.5,469.5 727.5,469.5 728.5,472.5 729.5,457.5 730.5,463.5 731.5,484.5 732.5,471.5 733.5,467.5 734.5,472.5 735.5,468.5 736.5,469.5 737.5,470.5 738.5,484.5 739.5,467.5 740.5,480.5 741.5,468.5 742.5,470.5 743.5,466.5 744.5,469.5 745.5,474.5 746.5,477.5 747.5,472.5 748.5,472.5 749.5,484.5 750.5,469.5 751.5,475.5 752.5,472.5 753.5,483.5 754.5,475.5 755.5,478.5 756.5,481.5 757.5,470.5 758.5,467.5 759.5,469.5 760.5,474.5 761.5,480.5 762.5,472.5 763.5,469.5 764.5,473.5 765.5,467.5 766.5,477.5 767.5,475.5 768.5,468.5 769.5,484.5 770.5,478.5 771.5,475.5 772.5,472.5 773.5,467.5 774.5,478.5 775.5,467.5 776.5,481.5 777.5,474.5 778.5,464.5 779.5,434.5 780.5,442.5 781.5,468.5 782.5,484.5 783.5,472.5 784.5,476.5 785.5,468.5 786.5,479.5 787.5,472.5 788.5,475.5 789.5,473.5 790.5,469.5 791.5,479.5 792.5,476.5 793.5,467.5 794.5,470.5 795.5,476.5 796.5,471.5 797.5,470.5 798.5,474.5 799.5,477.5 800.5,468.5 801.5,482.5 802.5,475.5 803.5,469.5 804.5,476.5 805.5,473.5 806.5,481.5 807.5,469.5 808.5,469.5 809.5,476.5 810.5,478.5 811.5,474.5 812.5,482.5 813.5,470.5 814.5,468.5 815.5,471.5 816.5,471.5 817.5,480.5 818.5,471.5 819.5,470.5 820.5,473.5 821.5,469.5 822.5,477.5 823.5,467.5 824.5,477.5 825.5,471.5 826.5,479.5 827.5,470.5 828.5,469.5 829.5,480.5 830.5,473.5 831.5,467.5 832.5,468.5 833.5,473.5 834.5,468.5 835.5,483.5 836.5,468.5 837.5,483.5 838.5,472.5 839.5,470.5 840.5,474.5 841.5,467.5 842.5,470.5 843.5,471.5 844.5,474.5 845.5,481.5 846.5,466.5 847.5,470.5 848.5,475.5 849.5,479.5 850.5,468.5 851.5,472.5 852.5,473.5 853.5,474.5 854.5,471.5 855.5,465.5 856.5,477.5 857.5,469.5 858.5,470.5 859.5,479.5 860.5,466.5 861.5,472.5 862.5,473.5 863.5,473.5 864.5,469.5 865.5,479.5 866.5,468.5 867.5,472.5 868.5,477.5 869.5,474.5 870.5,468.5 871.5,472.5 872.5,472.5 873.5,474.5 874.5,467.5 875.5,471.5 876.5,474.5 877.5,469.5 878.5,474.5 879.5,481.5 880.5,473.5 881.5,470.5 882.5,469.5 883.5,474.5 884.5,469.5 885.5,470.5 886.5,470.5 887.5,465.5 888.5,481.5 889.5,480.5 890.5,466.5 891.5,471.5 892.5,465.5 893.5,471.5 894.5,474.5 895.5,466.5 896.5,471.5 897.5,480.5 898.5,470.5 899.5,474.5 900.5,465.5 901.5,476.5 902.5,470.5 903.5,480.5 904.5,465.5 905.5,475.5 906.5,471.5 907.5,466.5 908.5,469.5 909.5,464.5 910.5,475.5 911.5,472.5 912.5,472.5 913.5,473.5 914.5,465.5 915.5,473.5 916.5,475.5 917.5,474.5 918.5,469.5 919.5,479.5 920.5,470.5 921.5,475.5 922.5,473.5 923.5,472.5 924.5,467.5 925.5,472.5 926.5,467.5 927.5,469.5 928.5,468.5 929.5,466.5 930.5,477.5 931.5,472.5 932.5,473.5 933.5,471.5 934.5,465.5 935.5,466.5 936.5,470.5 937.5,468.5 938.5,468.5 939.5,466.5 940.5,469.5 941.5,472.5 942.5,471.5 943.5,465.5 944.5,468.5 945.5,467.5 946.5,478.5 947.5,465.5 948.5,470.5 949.5,474.5 950.5,468.5 951.5,471.5 952.5,473.5 953.5,465.5 954.5,467.5 955.5,480.5 956.5,474.5 957.5,472.5 958.5,472.5 959.5,467.5 960.5,469.5 961.5,475.5 962.5,466.5 963.5,469.5 964.5,472.5 965.5,471.5 966.5,470.5 967.5,476.5 968.5,474.5 969.5,471.5 970.5,467.5 971.5,479.5 972.5,469.5 973.5,470.5 974.5,471.5 975.5,466.5 976.5,467.5 977.5,475.5 978.5,473.5 979.5,471.5 980.5,477.5 981.5,467.5 982.5,468.5 983.5,471.5 984.5,465.5 985.5,473.5 986.5,470.5 987.5,468.5 988.5,465.5 989.5,469.5 990.5,474.5 991.5,468.5 992.5,473.5 993.5,466.5 994.5,471.5 995.5,473.5 996.5,474.5 997.5,469.5 998.5,465.5 999.5,468.5 1000.5,468.5 1001.5,473.5 1002.5,471.5 1003.5,465.5 1004.5,467.5 1005.5,466.5 1006.5,466.5 1007.5,478.5 1008.5,466.5 1009.5,464.5 1010.5,471.5 1011.5,475.5 1012.5,472.5 1013.5,466.5 1014.5,472.5 1015.5,471.5 1016.5,475.5 1017.5,464.5 1018.5,469.5 1019.5,467.5 1020.5,472.5 1021.5,466.5 1022.5,471.5 1023.5,473.5 1024.5,466.5 1025.5,476.5 1026.5,466.5 1027.5,473.5 1028.5,469.5 1029.5,468.5 1030.5,464.5 1031.5,470.5 1032.5,471.5 1033.5,469.5 1034.5,472.5 1035.5,469.5 1036.5,468.5 1037.5,472.5 1038.5,476.5 1039.5,472.5 1040.5,471.5 1041.5,474.5 1042.5,470.5 1043.5,469.5 1044.5,469.5 1045.5,468.5 1046.5,472.5 1047.5,467.5 1048.5,468.5 1049.5,469.5 1050.5,474.5 1051.5,468.5 1052.5,468.5 1053.5,465.5 1054.5,469.5 1055.5,470.5 1056.5,470.5 1057.5,469.5 1058.5,471.5 1059.5,473.5 1060.5,475.5 1061.5,469.5 1062.5,474.5 1063.5,465.5 1064.5,468.5 1065.5,470.5 1066.5,475.5 1067.5,470.5 1068.5,471.5 1069.5,470.5 1070.5,473.5 1071.5,472.5 1072.5,472.5 1073.5,470.5 1074.5,466.5 1075.5,470.5 1076.5,469.5 1077.5,474.5 1078.5,465.5 1079.5,465.5 1080.5,472.5 1081.5,469.5 1082.5,474.5 1083.5,472.5 1084.5,468.5 1085.5,471.5 1086.5,471.5 1087.5,471.5 1088.5,470.5 1089.5,467.5 1090.5,470.5 1091.5,471.5 1092.5,464.5 1093.5,470.5 1094.5,469.5 1095.5,468.5 1096.5,468.5 1097.5,469.5 1098.5,471.5 1099.5,474.5 1100.5,468.5 1101.5,467.5 1102.5,473.5 1103.5,469.5 1104.5,464.5 1105.5,471.5 1106.5,472.5 1107.5,468.5 1108.5,469.5 1109.5,471.5 1110.5,470.5 1111.5,470.5 1112.5,471.5 1113.5,467.5 1114.5,476.5 1115.5,471.5 1116.5,469.5 1117.5,469.5 1118.5,471.5 1119.5,474.5 1120.5,466.5 1121.5,471.5 1122.5,466.5 1123.5,471.5 1124.5,465.5 1125.5,471.5 1126.5,471.5 1127.5,473.5 1128.5,476.5 1129.5,466.5 1130.5,469.5 1131.5,470.5 1132.5,472.5 1133.5,470.5 1134.5,465.5 1135.5,474.5 1136.5,470.5 1137.5,468.5 1138.5,472.5 1139.5,470.5 1140.5,474.5 1141.5,467.5 1142.5,476.5 1143.5,469.5 1144.5,465.5 1145.5,469.5 1146.5,466.5 1147.5,475.5 1148.5,467.5 1149.5,474.5 1150.5,467.5 1151.5,469.5 1152.5,469.5 1153.5,466.5 1154.5,473.5 1155.5,475.5 1156.5,467.5 1157.5,470.5 1158.5,473.5 1159.5,472.5 1160.5,471.5 1161.5,467.5 1162.5,471.5 1163.5,466.5 1164.5,471.5 1165.5,466.5 1166.5,467.5 1167.5,470.5 1168.5,470.5 1169.5,470.5 1170.5,468.5 1171.5,469.5 1172.5,471.5 1173.5,470.5 1174.5,470.5 1175.5,481.5 1176.5,468.5 1177.5,467.5 1178.5,467.5 1179.5,468.5 1180.5,466.5 1181.5,467.5 1182.5,468.5 1183.5,466.5 1184.5,467.5 1185.5,471.5 1186.5,474.5 1187.5,468.5 1188.5,470.5 1189.5,468.5 1190.5,472.5 1191.5,473.5 1192.5,466.5 1193.5,467.5 1194.5,467.5 1195.5,470.5 1196.5,467.5 1197.5,471.5 1198.5,467.5 1199.5,464.5 1200.5,467.5 1201.5,474.5 1202.5,471.5 1203.5,472.5 1204.5,467.5 1205.5,470.5 1206.5,467.5 1207.5,472.5 1208.5,471.5 1209.5,470.5 1210.5,474.5 1211.5,469.5 1212.5,468.5 1213.5,468.5 1214.5,467.5 1215.5,474.5 1216.5,470.5 1217.5,470.5 1218.5,464.5 1219.5,470.5 1220.5,469.5 1221.5,472.5 1222.5,464.5 1223.5,471.5 1224.5,467.5 1225.5,476.5 1226.5,469.5 1227.5,471.5 1228.5,469.5 1229.5,471.5 1230.5,471.5 1231.5,467.5 1232.5,470.5 1233.5,467.5 1234.5,464.5 1235.5,464.5 1236.5,472.5 1237.5,466.5 1238.5,465.5 1239.5,469.5 1240.5,464.5 1241.5,467.5 1242.5,465.5 1243.5,470.5 1244.5,471.5 1245.5,468.5 1246.5,464.5 1247.5,469.5 1248.5,468.5 1249.5,472.5 1250.5,467.5 1251.5,473.5 1252.5,468.5 1253.5,471.5 1254.5,473.5 1255.5,469.5 1256.5,471.5 1257.5,471.5 1258.5,475.5 1259.5,471.5 1260.5,465.5 1261.5,464.5 1262.5,466.5 1263.5,473.5 1264.5,467.5 1265.5,474.5 1266.5,473.5 1267.5,469.5 1268.5,469.5 1269.5,469.5 1270.5,473.5 1271.5,466.5 1272.5,472.5 1273.5,466.5 1274.5,465.5 1275.5,466.5 1276.5,469.5 1277.5,468.5 1278.5,469.5 1279.5,468.5 1280.5,470.5 1281.5,467.5 1282.5,468.5 1283.5,467.5 1284.5,465.5 1285.5,473.5 1286.5,469.5 1287.5,469.5 1288.5,473.5 1289.5,471.5 1290.5,471.5 1291.5,472.5 1292.5,471.5 1293.5,470.5 1294.5,471.5 1295.5,467.5 1296.5,469.5 1297.5,475.5 1298.5,466.5 1299.5,466.5 1300.5,473.5 1301.5,473.5 1302.5,474.5 1303.5,469.5 1304.5,466.5 1305.5,472.5 1306.5,471.5 1307.5,469.5 1308.5,468.5 1309.5,467.5 1310.5,470.5 1311.5,475.5 1312.5,471.5 1313.5,470.5 1314.5,467.5 1315.5,468.5 1316.5,469.5 1317.5,464.5 1318.5,464.5 1319.5,472.5 1320.5,471.5 1321.5,471.5 1322.5,468.5 1323.5,470.5 1324.5,473.5 1325.5,467.5 1326.5,472.5 1327.5,466.5 1328.5,464.5" fill="none" stroke="#ffffc0" stroke-width="1" shape-rendering="crispEdges"/>
<rect x="61" y="505" width="1268" height="323" fill="#262626"/>
<rect x="61" y="527" width="1268" height="1" fill="#808080"/>
<rect x="61" y="550" width="1268" height="1" fill="#808080"/>
<rect x="61" y="573" width="1268" height="1" fill="#808080"/>
<rect x="61" y="596" width="1268" height="1" fill="#808080"/>
<rect x="61" y="619" width="1268" height="1" fill="#808080"/>
<rect x="61" y="642" width="1268" height="1" fill="#808080"/>
<rect x="61" y="666" width="1268" height="1" fill="#808080"/>
<rect x="61" y="689" width="1268" height="1" fill="#808080"/>
<rect x="61" y="712" width="1268" height="1" fill="#808080"/>
<rect x="61" y="735" width="1268" height="1" fill="#808080"/>
<rect x="61" y="758" width="1268" height="1" fill="#808080"/>
<rect x="61" y="781" width="1268" height="1" fill="#808080"/>
<rect x="61" y="804" width="1268" height="1" fill="#808080"/>
<rect x="99" y="505" width="1" height="323" fill="#808080"/>
<rect x="170" y="505" width="1" height="323" fill="#808080"/>
<rect x="220" y="505" width="1" height="323" fill="#808080"/>
<rect x="258" y="505" width="1" height="323" fill="#808080"/>
<rect x="290" y="505" width="1" height="323" fill="#808080"/>
<rect x="317" y="505" width="1" height="323" fill="#808080"/>
<rect x="340" y="505" width="1" height="323" fill="#808080"/>
<rect x="360" y="505" width="1" height="323" fill="#808080"/>
<rect x="379" y="505" width="1" height="323" fill="#808080"/>
<rect x="499" y="505" width="1" height="323" fill="#808080"/>
<rect x="569" y="505" width="1" height="323" fill="#808080"/>
<rect x="619" y="505" width="1" height="323" fill="#808080"/>
<rect x="658" y="505" width="1" height="323" fill="#808080"/>
<rect x="690" y="505" width="1" height="323" fill="#808080"/>
<rect x="717" y="505" width="1" height="323" fill="#808080"/>
<rect x="740" y="505" width="1" height="323" fill="#808080"/>
<rect x="760" y="505" width="1" height="323" fill="#808080"/>
<rect x="778" y="505" width="1" height="323" fill="#808080"/>
<rect x="899" y="505" width="1" height="323" fill="#808080"/>
<rect x="969" y="505" width="1" height="323" fill="#808080"/>
<rect x="1019" y="505" width="1" height="323" fill="#808080"/>
<rect x="1058" y="505" width="1" height="323" fill="#808080"/>
<rect x="1090" y="505" width="1" height="323" fill="#808080"/>
<rect x="1116" y="505" width="1" height="323" fill="#808080"/>
<rect x="1140" y="505" width="1" height="323" fill="#808080"/>
<rect x="1160" y="505" width="1" height="323" fill="#808080"/>
<rect x="1178" y="505" width="1" height="323" fill="#808080"/>
<rect x="1299" y="505" width="1" height="323" fill="#808080"/>
<polyline points="61.5,822.5 62.9,822.5 66.5,793.5 71.0,786.5 74.1,792.5 77.9,796.5 81.5,793.5 85.5,785.5 88.5,783.5 90.5,785.5 94.8,798.5 98.5,797.5 105.5,803.5 107.9,811.5 111.0,799.5 114.8,804.5 119.8,819.5 122.9,812.5 124.8,797.5 127.9,792.5 132.9,812.5 135.5,810.5 139.1,782.5 141.0,784.5 144.1,822.5 147.2,809.5 151.0,827.5 152.9,811.5 157.9,827.5 164.8,805.5 167.2,804.5 172.9,816.5 175.5,801.5 177.2,810.5 181.0,801.5 183.5,810.5 187.2,801.5 191.0,815.5 192.9,800.5 196.0,827.5 199.8,796.5 205.4,827.5 210.4,821.5 213.5,797.5 216.0,816.5 217.9,812.5 221.5,827.5 224.8,810.5 227.2,809.5 232.9,827.5 236.0,807.5 238.5,807.5 239.5,827.5 240.5,810.5 241.5,806.5 242.5,806.5 243.5,809.5 244.5,827.5 245.5,809.5 246.5,804.5 247.5,811.5 248.5,817.5 249.5,815.5 250.5,822.5 251.5,827.5 252.5,811.5 253.5,816.5 254.5,823.5 255.5,827.5 256.5,808.5 257.5,823.5 258.5,803.5 259.5,774.5 260.5,779.5 261.5,803.5 262.5,809.5 263.5,815.5 264.5,820.5 265.5,806.5 266.5,813.5 267.5,826.5 268.5,809.5 269.5,818.5 270.5,811.5 271.5,810.5 272.5,819.5 273.5,814.5 274.5,827.5 275.5,815.5 276.5,827.5 277.5,825.5 278.5,814.5 279.5,827.5 280.5,810.5 281.5,814.5 282.5,804.5 283.5,813.5 284.5,809.5 285.5,810.5 286.5,815.5 287.5,822.5 288.5,810.5 289.5,816.5 290.5,822.5 291.5,804.5 292.5,823.5 293.5,827.5 294.5,822.5 295.5,807.5 296.5,811.5 297.5,809.5 298.5,808.5 299.5,819.5 300.5,811.5 301.5,827.5 302.5,805.5 303.5,805.5 304.5,815.5 305.5,823.5 306.5,805.5 307.5,827.5 308.5,820.5 309.5,825.5 310.5,808.5 311.5,810.5 312.5,826.5 313.5,827.5 314.5,810.5 315.5,808.5 316.5,804.5 317.5,812.5 318.5,817.5 319.5,812.5 320.5,806.5 321.5,810.5 322.5,791.5 323.5,795.5 324.5,819.5 325.5,807.5 326.5,816.5 327.5,825.5 328.5,820.5 329.5,827.5 330.5,815.5 331.5,816.5 332.5,827.5 333.5,813.5 334.5,825.5 335.5,805.5 336.5,816.5 337.5,826.5 338.5,815.5 339.5,806.5 340.5,812.5 341.5,824.5 342.5,815.5 343.5,820.5 344.5,815.5 345.5,808.5 346.5,818.5 347.5,811.5 348.5,817.5 349.5,827.5 350.5,821.5 351.5,821.5 352.5,827.5 353.5,817.5 354.5,810.5 355.5,807.5 356.5,806.5 357.5,810.5 358.5,827.5 359.5,807.5 360.5,809.5 361.5,806.5 362.5,810.5 363.5,827.5 364.5,827.5 365.5,818.5 366.5,808.5 367.5,808.5 368.5,820.5 369.5,827.5 370.5,809.5 371.5,807.5 372.5,806.5 373.5,819.5 374.5,827.5 375.5,811.5 376.5,822.5 377.5,823.5 378.5,781.5 379.5,753.5 380.5,762.5 381.5,792.5 382.5,808.5 383.5,809.5 384.5,808.5 385.5,808.5 386.5,818.5 387.5,816.5 388.5,806.5 389.5,827.5 390.5,807.5 391.5,824.5 392.5,827.5 393.5,812.5 394.5,827.5 395.5,827.5 396.5,810.5 397.5,815.5 398.5,811.5 399.5,806.5 400.5,818.5 401.5,813.5 402.5,811.5 403.5,808.5 404.5,804.5 405.5,824.5 406.5,808.5 407.5,814.5 408.5,807.5 409.5,812.5 410.5,821.5 411.5,817.5 412.5,811.5 413.5,811.5 414.5,811.5 415.5,813.5 416.5,810.5 417.5,821.5 418.5,795.5 419.5,803.5 420.5,813.5 421.5,810.5 422.5,821.5 423.5,812.5 424.5,813.5 425.5,812.5 426.5,824.5 427.5,805.5 428.5,810.5 429.5,812.5 430.5,811.5 431.5,811.5 432.5,818.5 433.5,810.5 434.5,812.5 435.5,805.5 436.5,807.5 437.5,811.5 438.5,807.5 439.5,812.5 440.5,808.5 441.5,808.5 442.5,827.5 443.5,813.5 444.5,817.5 445.5,827.5 446.5,813.5 447.5,806.5 448.5,825.5 449.5,807.5 450.5,776.5 451.5,781.5 452.5,808.5 453.5,827.5 454.5,812.5 455.5,813.5 456.5,827.5 457.5,824.5 458.5,806.5 459.5,827.5 460.5,815.5 461.5,819.5 462.5,820.5 463.5,811.5 464.5,811.5 465.5,810.5 466.5,823.5 467.5,812.5 468.5,806.5 469.5,822.5 470.5,818.5 471.5,812.5 472.5,825.5 473.5,827.5 474.5,822.5 475.5,801.5 476.5,823.5 477.5,800.5 478.5,809.5 479.5,816.5 480.5,811.5 481.5,819.5 482.5,827.5 483.5,810.5 484.5,809.5 485.5,810.5 486.5,813.5 487.5,827.5 488.5,812.5 489.5,811.5 490.5,808.5 491.5,812.5 492.5,806.5 493.5,810.5 494.5,822.5 495.5,814.5 496.5,815.5 497.5,808.5 498.5,811.5 499.5,789.5 500.5,759.5 501.5,769.5 502.5,792.5 503.5,813.5 504.5,813.5 505.5,827.5 506.5,819.5 507.5,827.5 508.5,827.5 509.5,804.5 510.5,827.5 511.5,813.5 512.5,826.5 513.5,819.5 514.5,809.5 515.5,821.5 516.5,814.5 517.5,827.5 518.5,818.5 519.5,814.5 520.5,817.5 521.5,795.5 522.5,803.5 523.5,813.5 524.5,827.5 525.5,819.5 526.5,811.5 527.5,810.5 528.5,820.5 529.5,818.5 530.5,827.5 531.5,827.5 532.5,812.5 533.5,808.5 534.5,811.5 535.5,817.5 536.5,827.5 537.5,811.5 538.5,811.5 539.5,781.5 540.5,788.5 541.5,818.5 542.5,827.5 543.5,823.5 544.5,827.5 545.5,812.5 546.5,827.5 547.5,817.5 548.5,823.5 549.5,825.5 550.5,812.5 551.5,821.5 552.5,818.5 553.5,827.5 554.5,819.5 555.5,800.5 556.5,806.5 557.5,816.5 558.5,827.5 559.5,827.5 560.5,827.5 561.5,821.5 562.5,808.5 563.5,822.5 564.5,820.5 565.5,813.5 566.5,811.5 567.5,813.5 568.5,815.5 569.5,807.5 570.5,783.5 571.5,793.5 572.5,809.5 573.5,816.5 574.5,809.5 575.5,827.5 576.5,811.5 577.5,827.5 578.5,809.5 579.5,827.5 580.5,827.5 581.5,827.5 582.5,812.5 583.5,812.5 584.5,819.5 585.5,804.5 586.5,811.5 587.5,809.5 588.5,825.5 589.5,825.5 590.5,827.5 591.5,821.5 592.5,807.5 593.5,814.5 594.5,814.5 595.5,827.5 596.5,806.5 597.5,793.5 598.5,797.5 599.5,821.5 600.5,811.5 601.5,827.5 602.5,824.5 603.5,809.5 604.5,811.5 605.5,813.5 606.5,819.5 607.5,810.5 608.5,810.5 609.5,812.5 610.5,811.5 611.5,817.5 612.5,817.5 613.5,816.5 614.5,819.5 615.5,827.5 616.5,827.5 617.5,815.5 618.5,808.5 619.5,823.5 620.5,813.5 621.5,811.5 622.5,811.5 623.5,825.5 624.5,821.5 625.5,827.5 626.5,817.5 627.5,814.5 628.5,809.5 629.5,819.5 630.5,818.5 631.5,808.5 632.5,812.5 633.5,817.5 634.5,813.5 635.5,827.5 636.5,818.5 637.5,824.5 638.5,812.5 639.5,813.5 640.5,812.5 641.5,784.5 642.5,788.5 643.5,816.5 644.5,812.5 645.5,812.5 646.5,827.5 647.5,827.5 648.5,813.5 649.5,825.5 650.5,825.5 651.5,813.5 652.5,820.5 653.5,827.5 654.5,811.5 655.5,820.5 656.5,815.5 657.5,815.5 658.5,812.5 659.5,799.5 660.5,803.5 661.5,814.5 662.5,827.5 663.5,820.5 664.5,819.5 665.5,812.5 666.5,812.5 667.5,812.5 668.5,825.5 669.5,821.5 670.5,810.5 671.5,827.5 672.5,811.5 673.5,820.5 674.5,825.5 675.5,819.5 676.5,820.5 677.5,827.5 678.5,811.5 679.5,819.5 680.5,821.5 681.5,825.5 682.5,823.5 683.5,814.5 684.5,827.5 685.5,812.5 686.5,812.5 687.5,817.5 688.5,812.5 689.5,810.5 690.5,825.5 691.5,799.5 692.5,808.5 693.5,810.5 694.5,814.5 695.5,827.5 696.5,813.5 697.5,814.5 698.5,813.5 699.5,812.5 700.5,815.5 701.5,817.5 702.5,812.5 703.5,812.5 704.5,817.5 705.5,821.5 706.5,820.5 707.5,810.5 708.5,810.5 709.5,823.5 710.5,809.5 711.5,816.5 712.5,813.5 713.5,814.5 714.5,813.5 715.5,812.5 716.5,813.5 717.5,813.5 718.5,818.5 719.5,827.5 720.5,810.5 721.5,812.5 722.5,827.5 723.5,810.5 724.5,816.5 725.5,812.5 726.5,826.5 727.5,810.5 728.5,814.5 729.5,797.5 730.5,802.5 731.5,818.5 732.5,812.5 733.5,811.5 734.5,827.5 735.5,824.5 736.5,815.5 737.5,811.5 738.5,812.5 739.5,820.5 740.5,818.5 741.5,824.5 742.5,815.5 743.5,811.5 744.5,827.5 745.5,811.5 746.5,810.5 747.5,811.5 748.5,814.5 749.5,822.5 750.5,812.5 751.5,827.5 752.5,822.5 753.5,819.5 754.5,816.5 755.5,812.5 756.5,811.5 757.5,820.5 758.5,816.5 759.5,814.5 760.5,817.5 761.5,815.5 762.5,813.5 763.5,822.5 764.5,823.5 765.5,811.5 766.5,817.5 767.5,825.5 768.5,815.5 769.5,818.5 770.5,827.5 771.5,822.5 772.5,821.5 773.5,821.5 774.5,812.5 775.5,813.5 776.5,818.5 777.5,810.5 778.5,800.5 779.5,775.5 780.5,780.5 781.5,808.5 782.5,809.5 783.5,820.5 784.5,810.5 785.5,823.5 786.5,816.5 787.5,817.5 788.5,813.5 789.5,817.5 790.5,822.5 791.5,812.5 792.5,826.5 793.5,816.5 794.5,811.5 795.5,822.5 796.5,819.5 797.5,813.5 798.5,815.5 799.5,825.5 800.5,814.5 801.5,811.5 802.5,827.5 803.5,819.5 804.5,815.5 805.5,820.5 806.5,808.5 807.5,819.5 808.5,817.5 809.5,812.5 810.5,822.5 811.5,816.5 812.5,807.5 813.5,821.5 814.5,809.5 815.5,826.5 816.5,816.5 817.5,822.5 818.5,809.5 819.5,812.5 820.5,820.5 821.5,814.5 822.5,820.5 823.5,808.5 824.5,817.5 825.5,816.5 826.5,810.5 827.5,815.5 828.5,813.5 829.5,817.5 830.5,811.5 831.5,817.5 832.5,810.5 833.5,811.5 834.5,812.5 835.5,811.5 836.5,816.5 837.5,817.5 838.5,811.5 839.5,810.5 840.5,812.5 841.5,820.5 842.5,809.5 843.5,818.5 844.5,815.5 845.5,820.5 846.5,824.5 847.5,817.5 848.5,811.5 849.5,822.5 850.5,820.5 851.5,808.5 852.5,815.5 853.5,816.5 854.5,814.5 855.5,818.5 856.5,811.5 857.5,817.5 858.5,815.5 859.5,820.5 860.5,818.5 861.5,815.5 862.5,808.5 863.5,812.5 864.5,824.5 865.5,816.5 866.5,812.5 867.5,813.5 868.5,816.5 869.5,812.5 870.5,818.5 871.5,818.5 872.5,816.5 873.5,811.5 874.5,815.5 875.5,811.5 876.5,824.5 877.5,809.5 878.5,807.5 879.5,817.5 880.5,816.5 881.5,808.5 882.5,815.5 883.5,811.5 884.5,813.5 885.5,813.5 886.5,816.5 887.5,818.5 888.5,810.5 889.5,813.5 890.5,810.5 891.5,822.5 892.5,815.5 893.5,813.5 894.5,818.5 895.5,813.5 896.5,817.5 897.5,816.5 898.5,815.5 899.5,814.5 900.5,807.5 901.5,818.5 902.5,815.5 903.5,815.5 904.5,821.5 905.5,809.5 906.5,812.5 907.5,812.5 908.5,820.5 909.5,819.5 910.5,805.5 911.5,816.5 912.5,808.5 913.5,812.5 914.5,815.5 915.5,809.5 916.5,809.5 917.5,823.5 918.5,808.5 919.5,808.5 920.5,808.5 921.5,817.5 922.5,810.5 923.5,817.5 924.5,811.5 925.5,819.5 926.5,814.5 927.5,809.5 928.5,811.5 929.5,807.5 930.5,818.5 931.5,810.5 932.5,815.5 933.5,814.5 934.5,809.5 935.5,813.5 936.5,813.5 937.5,813.5 938.5,810.5 939.5,811.5 940.5,814.5 941.5,815.5 942.5,810.5 943.5,812.5 944.5,807.5 945.5,812.5 946.5,815.5 947.5,808.5 948.5,813.5 949.5,816.5 950.5,811.5 951.5,815.5 952.5,814.5 953.5,816.5 954.5,814.5 955.5,812.5 956.5,814.5 957.5,814.5 958.5,814.5 959.5,816.5 960.5,807.5 961.5,807.5 962.5,807.5 963.5,814.5 964.5,813.5 965.5,805.5 966.5,810.5 967.5,808.5 968.5,820.5 969.5,810.5 970.5,811.5 971.5,807.5 972.5,820.5 973.5,813.5 974.5,811.5 975.5,813.5 976.5,813.5 977.5,815.5 978.5,818.5 979.5,811.5 980.5,820.5 981.5,820.5 982.5,812.5 983.5,814.5 984.5,810.5 985.5,809.5 986.5,818.5 987.5,811.5 988.5,816.5 989.5,819.5 990.5,805.5 991.5,810.5 992.5,816.5 993.5,814.5 994.5,810.5 995.5,815.5 996.5,815.5 997.5,810.5 998.5,808.5 999.5,808.5 1000.5,812.5 1001.5,811.5 1002.5,813.5 1003.5,808.5 1004.5,809.5 1005.5,812.5 1006.5,815.5 1007.5,810.5 1008.5,816.5 1009.5,815.5 1010.5,808.5 1011.5,806.5 1012.5,807.5 1013.5,818.5 1014.5,812.5 1015.5,816.5 1016.5,820.5 1017.5,818.5 1018.5,810.5 1019.5,815.5 1020.5,810.5 1021.5,807.5 1022.5,812.5 1023.5,814.5 1024.5,808.5 1025.5,813.5 1026.5,807.5 1027.5,815.5 1028.5,813.5 1029.5,816.5 1030.5,819.5 1031.5,814.5 1032.5,808.5 1033.5,820.5 1034.5,812.5 1035.5,809.5 1036.5,815.5 1037.5,809.5 1038.5,817.5 1039.5,808.5 1040.5,808.5 1041.5,817.5 1042.5,809.5 1043.5,811.5 1044.5,818.5 1045.5,813.5 1046.5,808.5 1047.5,811.5 1048.5,815.5 1049.5,810.5 1050.5,812.5 1051.5,815.5 1052.5,801.5 1053.5,808.5 1054.5,818.5 1055.5,819.5 1056.5,807.5 1057.5,813.5 1058.5,811.5 1059.5,808.5 1060.5,808.5 1061.5,809.5 1062.5,817.5 1063.5,818.5 1064.5,811.5 1065.5,808.5 1066.5,810.5 1067.5,811.5 1068.5,813.5 1069.5,812.5 1070.5,814.5 1071.5,811.5 1072.5,813.5 1073.5,810.5 1074.5,814.5 1075.5,818.5 1076.5,812.5 1077.5,813.5 1078.5,816.5 1079.5,810.5 1080.5,811.5 1081.5,813.5 1082.5,808.5 1083.5,818.5 1084.5,814.5 1085.5,808.5 1086.5,817.5 1087.5,814.5 1088.5,808.5 1089.5,811.5 1090.5,814.5 1091.5,807.5 1092.5,818.5 1093.5,816.5 1094.5,816.5 1095.5,814.5 1096.5,816.5 1097.5,807.5 1098.5,811.5 1099.5,815.5 1100.5,809.5 1101.5,806.5 1102.5,816.5 1103.5,812.5 1104.5,816.5 1105.5,817.5 1106.5,814.5 1107.5,814.5 1108.5,813.5 1109.5,811.5 1110.5,809.5 1111.5,812.5 1112.5,816.5 1113.5,817.5 1114.5,812.5 1115.5,817.5 1116.5,816.5 1117.5,808.5 1118.5,813.5 1119.5,814.5 1120.5,816.5 1121.5,815.5 1122.5,811.5 1123.5,817.5 1124.5,815.5 1125.5,812.5 1126.5,816.5 1127.5,813.5 1128.5,817.5 1129.5,814.5 1130.5,812.5 1131.5,809.5 1132.5,812.5 1133.5,816.5 1134.5,818.5 1135.5,816.5 1136.5,810.5 1137.5,809.5 1138.5,808.5 1139.5,814.5 1140.5,813.5 1141.5,814.5 1142.5,812.5 1143.5,815.5 1144.5,807.5 1145.5,807.5 1146.5,814.5 1147.5,816.5 1148.5,811.5 1149.5,817.5 1150.5,811.5 1151.5,816.5 1152.5,809.5 1153.5,815.5 1154.5,818.5 1155.5,810.5 1156.5,811.5 1157.5,816.5 1158.5,812.5 1159.5,812.5 1160.5,814.5 1161.5,811.5 1162.5,810.5 1163.5,813.5 1164.5,815.5 1165.5,808.5 1166.5,808.5 1167.5,810.5 1168.5,810.5 1169.5,815.5 1170.5,808.5 1171.5,809.5 1172.5,819.5 1173.5,811.5 1174.5,812.5 1175.5,816.5 1176.5,810.5 1177.5,810.5 1178.5,811.5 1179.5,810.5 1180.5,813.5 1181.5,814.5 1182.5,811.5 1183.5,811.5 1184.5,810.5 1185.5,810.5 1186.5,818.5 1187.5,816.5 1188.5,812.5 1189.5,819.5 1190.5,815.5 1191.5,816.5 1192.5,812.5 1193.5,817.5 1194.5,812.5 1195.5,810.5 1196.5,807.5 1197.5,814.5 1198.5,816.5 1199.5,809.5 1200.5,813.5 1201.5,812.5 1202.5,817.5 1203.5,813.5 1204.5,817.5 1205.5,810.5 1206.5,814.5 1207.5,808.5 1208.5,812.5 1209.5,809.5 1210.5,809.5 1211.5,811.5 1212.5,812.5 1213.5,811.5 1214.5,808.5 1215.5,814.5 1216.5,812.5 1217.5,807.5 1218.5,809.5 1219.5,812.5 1220.5,813.5 1221.5,813.5 1222.5,808.5 1223.5,816.5 1224.5,817.5 1225.5,814.5 1226.5,808.5 1227.5,809.5 1228.5,812.5 1229.5,811.5 1230.5,812.5 1231.5,814.5 1232.5,816.5 1233.5,809.5 1234.5,811.5 1235.5,814.5 1236.5,810.5 1237.5,812.5 1238.5,811.5 1239.5,812.5 1240.5,812.5 1241.5,810.5 1242.5,810.5 1243.5,818.5 1244.5,815.5 1245.5,815.5 1246.5,814.5 1247.5,816.5 1248.5,817.5 1249.5,813.5 1250.5,811.5 1251.5,813.5 1252.5,806.5 1253.5,812.5 1254.5,809.5 1255.5,808.5 1256.5,815.5 1257.5,812.5 1258.5,807.5 1259.5,816.5 1260.5,810.5 1261.5,818.5 1262.5,805.5 1263.5,810.5 1264.5,808.5 1265.5,808.5 1266.5,808.5 1267.5,810.5 1268.5,807.5 1269.5,807.5 1270.5,815.5 1271.5,814.5 1272.5,813.5 1273.5,813.5 1274.5,811.5 1275.5,808.5 1276.5,813.5 1277.5,814.5 1278.5,815.5 1279.5,814.5 1280.5,812.5 1281.5,812.5 1282.5,814.5 1283.5,813.5 1284.5,813.5 1285.5,813.5 1286.5,810.5 1287.5,813.5 1288.5,814.5 1289.5,809.5 1290.5,817.5 1291.5,810.5 1292.5,814.5 1293.5,816.5 1294.5,808.5 1295.5,813.5 1296.5,813.5 1297.5,811.5 1298.5,814.5 1299.5,809.5 1300.5,812.5 1301.5,811.5 1302.5,812.5 1303.5,807.5 1304.5,815.5 1305.5,812.5 1306.5,812.5 1307.5,815.5 1308.5,810.5 1309.5,811.5 1310.5,815.5 1311.5,808.5 1312.5,803.5 1313.5,806.5 1314.5,813.5 1315.5,814.5 1316.5,809.5 1317.5,816.5 1318.5,809.5 1319.5,813.5 1320.5,812.5 1321.5,813.5 1322.5,814.5 1323.5,813.5 1324.5,811.5 1325.5,817.5 1326.5,807.5 1327.5,812.5 1328.5,809.5" fill="none" stroke="#ffffc0" stroke-width="1" shape-rendering="crispEdges"/>
<!-- meters -->
<rect x="1337" y="159" width="2" height="687" fill="#a0a0a0"/>
<rect x="1337" y="159" width="22" height="3" fill="#a0a0a0"/>
<rect x="1339" y="162" width="20" height="323" fill="#262626"/>
<rect x="1339" y="375" width="20" height="110" fill="#1a1a1a"/>
<rect x="1341" y="376" width="16" height="108" fill="#ffffc0"/>
<rect x="1359" y="159" width="2" height="328" fill="#fff"/>
<rect x="1339" y="485" width="22" height="2" fill="#fff"/>
<rect x="1337" y="502" width="22" height="3" fill="#a0a0a0"/>
<rect x="1339" y="505" width="20" height="323" fill="#262626"/>
<rect x="1339" y="718" width="20" height="110" fill="#1a1a1a"/>
<rect x="1341" y="719" width="16" height="108" fill="#ffffc0"/>
<rect x="1359" y="502" width="2" height="344" fill="#fff"/>
<!-- scrollbar -->
<rect x="61" y="828" width="1268" height="17" fill="#f6f6f6"/>
<rect x="59" y="845" width="1272" height="1" fill="#fff"/>
<rect x="61" y="828" width="17" height="16" fill="#f0f0f0"/>
<rect x="61" y="842" width="17" height="2" fill="#808080"/>
<rect x="76" y="828" width="2" height="16" fill="#808080"/>
<rect x="1312" y="828" width="17" height="16" fill="#f0f0f0"/>
<rect x="1312" y="842" width="17" height="2" fill="#808080"/>
<rect x="1327" y="828" width="2" height="16" fill="#808080"/>
<rect x="1128" y="828" width="17" height="16" fill="#f0f0f0"/>
<rect x="1128" y="842" width="17" height="2" fill="#808080"/>
<rect x="1143" y="828" width="2" height="16" fill="#808080"/>
<polygon points="67,835.5 71,831.5 71,839.5" fill="#000"/>
<polygon points="1322.5,835.5 1318,831 1318,840" fill="#000"/>
<!-- bottom frame line -->
<rect x="0" y="874" width="1440" height="1" fill="#808080"/>
<rect x="0" y="875" width="1440" height="2" fill="#fff"/>
<rect x="1339" y="845" width="22" height="1" fill="#fff"/>
<rect x="0" y="898" width="1440" height="2" fill="#7b6550"/><rect x="114" y="899" width="58" height="1" fill="#cfc6bd"/><rect x="237" y="899" width="59" height="1" fill="#fff"/>
</svg>

<div class="t" style="left:61px;top:144px">Pwr =-93.49</div>
<div class="t" style="left:1229px;width:100px;text-align:right;top:144px">Left</div>
<div class="t yl" style="top:155px">0.0</div>
<div class="t ml" style="top:155px">0.0</div>
<div class="tick" style="left:59px;top:161px"></div>
<div class="tick" style="left:1359px;top:161px;width:3px"></div>
<div class="t yl" style="top:178px">-10.0</div>
<div class="t ml" style="top:178px">-10.0</div>
<div class="tick" style="left:59px;top:184px"></div>
<div class="tick" style="left:1359px;top:184px;width:3px"></div>
<div class="t yl" style="top:201px">-20.0</div>
<div class="t ml" style="top:201px">-20.0</div>
<div class="tick" style="left:59px;top:207px"></div>
<div class="tick" style="left:1359px;top:207px;width:3px"></div>
<div class="t yl" style="top:224px">-30.0</div>
<div class="t ml" style="top:224px">-30.0</div>
<div class="tick" style="left:59px;top:230px"></div>
<div class="tick" style="left:1359px;top:230px;width:3px"></div>
<div class="t yl" style="top:247px">-40.0</div>
<div class="t ml" style="top:247px">-40.0</div>
<div class="tick" style="left:59px;top:253px"></div>
<div class="tick" style="left:1359px;top:253px;width:3px"></div>
<div class="t yl" style="top:270px">-50.0</div>
<div class="t ml" style="top:270px">-50.0</div>
<div class="tick" style="left:59px;top:276px"></div>
<div class="tick" style="left:1359px;top:276px;width:3px"></div>
<div class="t yl" style="top:293px">-60.0</div>
<div class="t ml" style="top:293px">-60.0</div>
<div class="tick" style="left:59px;top:299px"></div>
<div class="tick" style="left:1359px;top:299px;width:3px"></div>
<div class="t yl" style="top:317px">-70.0</div>
<div class="t ml" style="top:317px">-70.0</div>
<div class="tick" style="left:59px;top:323px"></div>
<div class="tick" style="left:1359px;top:323px;width:3px"></div>
<div class="t yl" style="top:340px">-80.0</div>
<div class="t ml" style="top:340px">-80.0</div>
<div class="tick" style="left:59px;top:346px"></div>
<div class="tick" style="left:1359px;top:346px;width:3px"></div>
<div class="t yl" style="top:363px">-90.0</div>
<div class="t ml" style="top:363px">-90.0</div>
<div class="tick" style="left:59px;top:369px"></div>
<div class="tick" style="left:1359px;top:369px;width:3px"></div>
<div class="t yl" style="top:386px">-100.0</div>
<div class="t ml" style="top:386px">-100.0</div>
<div class="tick" style="left:59px;top:392px"></div>
<div class="tick" style="left:1359px;top:392px;width:3px"></div>
<div class="t yl" style="top:409px">-110.0</div>
<div class="t ml" style="top:409px">-110.0</div>
<div class="tick" style="left:59px;top:415px"></div>
<div class="tick" style="left:1359px;top:415px;width:3px"></div>
<div class="t yl" style="top:432px">-120.0</div>
<div class="t ml" style="top:432px">-120.0</div>
<div class="tick" style="left:59px;top:438px"></div>
<div class="tick" style="left:1359px;top:438px;width:3px"></div>
<div class="t yl" style="top:455px">-130.0</div>
<div class="t ml" style="top:455px">-130.0</div>
<div class="tick" style="left:59px;top:461px"></div>
<div class="tick" style="left:1359px;top:461px;width:3px"></div>
<div class="t yl" style="top:479px">-140.0</div>
<div class="t ml" style="top:479px">-140.0</div>
<div class="tick" style="left:59px;top:485px"></div>
<div class="tick" style="left:1359px;top:485px;width:3px"></div>
<div class="t rot" style="top:322px">dBV rms</div>
<div class="t" style="left:61px;top:487px">Pwr =-93.60</div>
<div class="t" style="left:1229px;width:100px;text-align:right;top:487px">Right</div>
<div class="t yl" style="top:498px">0.0</div>
<div class="t ml" style="top:498px">0.0</div>
<div class="tick" style="left:59px;top:504px"></div>
<div class="tick" style="left:1359px;top:504px;width:3px"></div>
<div class="t yl" style="top:521px">-10.0</div>
<div class="t ml" style="top:521px">-10.0</div>
<div class="tick" style="left:59px;top:527px"></div>
<div class="tick" style="left:1359px;top:527px;width:3px"></div>
<div class="t yl" style="top:544px">-20.0</div>
<div class="t ml" style="top:544px">-20.0</div>
<div class="tick" style="left:59px;top:550px"></div>
<div class="tick" style="left:1359px;top:550px;width:3px"></div>
<div class="t yl" style="top:567px">-30.0</div>
<div class="t ml" style="top:567px">-30.0</div>
<div class="tick" style="left:59px;top:573px"></div>
<div class="tick" style="left:1359px;top:573px;width:3px"></div>
<div class="t yl" style="top:590px">-40.0</div>
<div class="t ml" style="top:590px">-40.0</div>
<div class="tick" style="left:59px;top:596px"></div>
<div class="tick" style="left:1359px;top:596px;width:3px"></div>
<div class="t yl" style="top:613px">-50.0</div>
<div class="t ml" style="top:613px">-50.0</div>
<div class="tick" style="left:59px;top:619px"></div>
<div class="tick" style="left:1359px;top:619px;width:3px"></div>
<div class="t yl" style="top:636px">-60.0</div>
<div class="t ml" style="top:636px">-60.0</div>
<div class="tick" style="left:59px;top:642px"></div>
<div class="tick" style="left:1359px;top:642px;width:3px"></div>
<div class="t yl" style="top:660px">-70.0</div>
<div class="t ml" style="top:660px">-70.0</div>
<div class="tick" style="left:59px;top:666px"></div>
<div class="tick" style="left:1359px;top:666px;width:3px"></div>
<div class="t yl" style="top:683px">-80.0</div>
<div class="t ml" style="top:683px">-80.0</div>
<div class="tick" style="left:59px;top:689px"></div>
<div class="tick" style="left:1359px;top:689px;width:3px"></div>
<div class="t yl" style="top:706px">-90.0</div>
<div class="t ml" style="top:706px">-90.0</div>
<div class="tick" style="left:59px;top:712px"></div>
<div class="tick" style="left:1359px;top:712px;width:3px"></div>
<div class="t yl" style="top:729px">-100.0</div>
<div class="t ml" style="top:729px">-100.0</div>
<div class="tick" style="left:59px;top:735px"></div>
<div class="tick" style="left:1359px;top:735px;width:3px"></div>
<div class="t yl" style="top:752px">-110.0</div>
<div class="t ml" style="top:752px">-110.0</div>
<div class="tick" style="left:59px;top:758px"></div>
<div class="tick" style="left:1359px;top:758px;width:3px"></div>
<div class="t yl" style="top:775px">-120.0</div>
<div class="t ml" style="top:775px">-120.0</div>
<div class="tick" style="left:59px;top:781px"></div>
<div class="tick" style="left:1359px;top:781px;width:3px"></div>
<div class="t yl" style="top:798px">-130.0</div>
<div class="t ml" style="top:798px">-130.0</div>
<div class="tick" style="left:59px;top:804px"></div>
<div class="tick" style="left:1359px;top:804px;width:3px"></div>
<div class="t yl" style="top:822px">-140.0</div>
<div class="t ml" style="top:822px">-140.0</div>
<div class="tick" style="left:59px;top:828px"></div>
<div class="tick" style="left:1359px;top:828px;width:3px"></div>
<div class="t rot" style="top:665px">dBV rms</div>
<div class="t xl" style="left:59px">20</div>
<div class="t xl" style="left:130px">30</div>
<div class="t xl" style="left:180px">40</div>
<div class="t xl" style="left:218px">50</div>
<div class="t xl" style="left:250px">60</div>
<div class="t xl" style="left:300px">80</div>
<div class="t xl" style="left:339px">100</div>
<div class="t xl" style="left:459px">200</div>
<div class="t xl" style="left:529px">300</div>
<div class="t xl" style="left:579px">400</div>
<div class="t xl" style="left:618px">500</div>
<div class="t xl" style="left:650px">600</div>
<div class="t xl" style="left:700px">800</div>
<div class="t xl" style="left:738px">1.0k</div>
<div class="t xl" style="left:859px">2.0k</div>
<div class="t xl" style="left:929px">3.0k</div>
<div class="t xl" style="left:979px">4.0k</div>
<div class="t xl" style="left:1018px">5.0k</div>
<div class="t xl" style="left:1050px">6.0k</div>
<div class="t xl" style="left:1100px">8.0k</div>
<div class="t xl" style="left:1138px">10.0k</div>
<div class="t xl" style="left:1259px">20.0k</div>
<div class="xt" style="left:99px"></div>
<div class="xt" style="left:170px"></div>
<div class="xt" style="left:220px"></div>
<div class="xt" style="left:258px"></div>
<div class="xt" style="left:290px"></div>
<div class="xt" style="left:317px"></div>
<div class="xt" style="left:340px"></div>
<div class="xt" style="left:360px"></div>
<div class="xt" style="left:379px"></div>
<div class="xt" style="left:499px"></div>
<div class="xt" style="left:569px"></div>
<div class="xt" style="left:619px"></div>
<div class="xt" style="left:658px"></div>
<div class="xt" style="left:690px"></div>
<div class="xt" style="left:717px"></div>
<div class="xt" style="left:740px"></div>
<div class="xt" style="left:760px"></div>
<div class="xt" style="left:778px"></div>
<div class="xt" style="left:899px"></div>
<div class="xt" style="left:969px"></div>
<div class="xt" style="left:1019px"></div>
<div class="xt" style="left:1058px"></div>
<div class="xt" style="left:1090px"></div>
<div class="xt" style="left:1116px"></div>
<div class="xt" style="left:1140px"></div>
<div class="xt" style="left:1160px"></div>
<div class="xt" style="left:1178px"></div>
<div class="xt" style="left:1299px"></div>
<div class="t" style="left:679px;top:859px">Frequency (Hz)</div>
<div class="t" style="left:1338px;top:848px">Pwr</div>
<div class="a" style="left:1346px;top:863px;width:9px;height:9px;border:1px solid #808080;border-top-color:#fff;border-left-color:#fff;background:#f0f0f0"><div class="a" style="left:2px;top:4px;width:4px;height:1px;background:#000"></div></div>
<div class="a" style="left:1428px;top:863px;width:9px;height:9px;border:1px solid #808080;border-top-color:#fff;border-left-color:#fff;background:#f0f0f0"><div class="a" style="left:1px;top:3px;width:5px;height:1px;background:#000"></div><div class="a" style="left:3px;top:1px;width:1px;height:5px;background:#000"></div></div>

<!-- status bar -->
<div class="sp" style="left:4px;width:118px"><span>Running...</span></div>
<div class="sp" style="left:124px;width:101px"><span>Real Time</span></div>
<div class="sp" style="left:227px;width:70px"><span>48000 Hz</span></div>
<div class="sp" style="left:299px;width:52px"><span>24 Bit</span></div>
<div class="sp" style="left:353px;width:61px"><span>Stereo</span></div>
<div class="sp" style="left:416px;width:101px"><span>FFT 131072 pts</span></div>
<div class="sp" style="left:519px;width:73px"><span>Blackman</span></div>
<div class="sp" style="left:594px;width:843px"></div>

<!-- stop dialog -->
<div class="a" style="left:468px;top:5px;width:53px;height:58px;border:1px solid #4a4f58;border-left-color:transparent;border-bottom:none;border-radius:6px 6px 0 0;background:linear-gradient(#c3d2e5,#dce7f4 22px,#dce7f4)"></div><div class="a" style="left:468px;top:9px;width:1px;height:21px;background:#4a4f58"></div>
<div class="a" style="left:471px;top:30px;width:47px;height:31px;background:#f0f0f0"></div>
<div class="a" style="left:471px;top:9px;width:13px;height:16px;background:#fff;border:1px solid #000"><svg class="zz" width="12" height="14"><path d="M0.5 10.5L3.5 7.5V10.5L6.5 7.5V10.5L9.5 7.5V10.5L11.5 8.5" fill="none" stroke="#444" stroke-width="1"/></svg></div>
<div class="a" style="left:483px;top:8px;width:34px;height:19px;border:1px solid #8798b0;border-radius:3px;background:linear-gradient(#dfe7f1,#c4d2e4)"><svg width="34" height="19" style="position:absolute;left:-1px;top:-1px"><path d="M12 5l10 9M22 5l-10 9" stroke="#4a5566" stroke-width="4.2" stroke-linecap="round"/><path d="M12 5l10 9M22 5l-10 9" stroke="#f4f4f4" stroke-width="2.4" stroke-linecap="round"/></svg></div>
<div class="a" style="left:473px;top:34px;width:42px;height:26px;border-top:1px solid #fff;border-left:1px solid #fff;border-right:2px solid #696969;border-bottom:2px solid #696969;background:#f0f0f0"></div>
<div class="t" style="left:481px;top:40px">Stop</div>

<!-- meter windows -->
<div class="mw" style="left:712px;width:168px"><div class="cont"></div><div class="ico"><svg class="zz" width="14" height="14"><path d="M1 8L4.5 4.5V9L9.5 4.5V9L12.5 6.5" fill="none" stroke="#555" stroke-width="1.1"/></svg></div><div class="ttl" style="left:39px">Total Pwr</div><div class="cls" style="left:127px"><svg width="34" height="19" style="position:absolute;left:-1px;top:-1px"><path d="M12 5l10 9M22 5l-10 9" stroke="#4a5566" stroke-width="4.2" stroke-linecap="round"/><path d="M12 5l10 9M22 5l-10 9" stroke="#f4f4f4" stroke-width="2.4" stroke-linecap="round"/></svg></div></div>
<div class="mv" style="left:718.9px;top:33px;transform:scaleX(0.5455)">-93.26 dBV rms</div>
<div class="mv" style="left:718.9px;top:77px;transform:scaleX(0.5455)">-93.22 dBV rms</div>
<div class="mw" style="left:879px;width:154px"><div class="cont"></div><div class="ico"><svg class="zz" width="14" height="14"><path d="M1 8L4.5 4.5V9L9.5 4.5V9L12.5 6.5" fill="none" stroke="#555" stroke-width="1.1"/></svg></div><div class="ttl" style="left:29px">Peak Am...</div><div class="cls" style="left:112px"><svg width="34" height="19" style="position:absolute;left:-1px;top:-1px"><path d="M12 5l10 9M22 5l-10 9" stroke="#4a5566" stroke-width="4.2" stroke-linecap="round"/><path d="M12 5l10 9M22 5l-10 9" stroke="#f4f4f4" stroke-width="2.4" stroke-linecap="round"/></svg></div></div>
<div class="mv" style="left:887.1px;top:33px;transform:scaleX(0.4545)">-106.85 dBV rms</div>
<div class="mv" style="left:887.1px;top:77px;transform:scaleX(0.4545)">-107.16 dBV rms</div>
<div class="mw" style="left:1032px;width:152px"><div class="cont"></div><div class="ico"><svg class="zz" width="14" height="14"><path d="M1 8L4.5 4.5V9L9.5 4.5V9L12.5 6.5" fill="none" stroke="#555" stroke-width="1.1"/></svg></div><div class="ttl" style="left:29px">Peak Fre...</div><div class="cls" style="left:111px"><svg width="34" height="19" style="position:absolute;left:-1px;top:-1px"><path d="M12 5l10 9M22 5l-10 9" stroke="#4a5566" stroke-width="4.2" stroke-linecap="round"/><path d="M12 5l10 9M22 5l-10 9" stroke="#f4f4f4" stroke-width="2.4" stroke-linecap="round"/></svg></div></div>
<div class="mv" style="left:1045.4px;top:33px;transform:scaleX(0.7771)">99.98 Hz</div>
<div class="mv" style="left:1045.4px;top:77px;transform:scaleX(0.7771)">99.98 Hz</div>
<div class="mw" style="left:1183px;width:152px"><div class="cont"></div><div class="ico"><svg class="zz" width="14" height="14"><path d="M1 8L4.5 4.5V9L9.5 4.5V9L12.5 6.5" fill="none" stroke="#555" stroke-width="1.1"/></svg></div><div class="ttl" style="left:49px">THD</div><div class="cls" style="left:110px"><svg width="34" height="19" style="position:absolute;left:-1px;top:-1px"><path d="M12 5l10 9M22 5l-10 9" stroke="#4a5566" stroke-width="4.2" stroke-linecap="round"/><path d="M12 5l10 9M22 5l-10 9" stroke="#f4f4f4" stroke-width="2.4" stroke-linecap="round"/></svg></div></div>
<div class="mv" style="left:1185.7px;top:33px;transform:scaleX(0.6731)">84.82911 %</div>
<div class="mv" style="left:1185.7px;top:77px;transform:scaleX(0.6635)">92.05815 %</div>

<!-- window controls -->
<div class="a" style="left:1334px;top:2px;width:31px;height:19px;border:1px solid #6f7f96;border-radius:3px;background:linear-gradient(#d4e2f1 0%,#bccfe5 45%,#98b2d0 50%,#b0c6de 100%)"><div class="a" style="left:8px;top:10px;width:13px;height:5px;background:#fff;border:1px solid #3a4556;border-radius:1px"></div></div>
<div class="a" style="left:1368px;top:2px;width:33px;height:19px;border:1px solid #6f7f96;border-radius:3px;background:linear-gradient(#d4e2f1 0%,#bccfe5 45%,#98b2d0 50%,#b0c6de 100%)"><div class="a" style="left:13px;top:4px;width:9px;height:9px;border:2px solid #fff;outline:1px solid #3a4556"></div><div class="a" style="left:9px;top:8px;width:9px;height:9px;border:2px solid #fff;outline:1px solid #3a4556;background:#a9bfd9"></div></div>
<div class="a" style="left:1404px;top:2px;width:34px;height:19px;border:1px solid #4a1515;border-radius:3px;background:linear-gradient(#eaa79a 0%,#e0907e 45%,#c4432a 50%,#d06a52 100%)"><svg width="34" height="19" style="position:absolute;left:-1px;top:-1px"><path d="M12 5l10 9M22 5l-10 9" stroke="#3a3a4a" stroke-width="4.5" stroke-linecap="round"/><path d="M12 5l10 9M22 5l-10 9" stroke="#fff" stroke-width="2.8" stroke-linecap="round"/></svg></div>
<div class="a" style="left:1383px;top:25px;width:18px;height:18px;border:1px solid #b5c8dd;background:linear-gradient(#eef3fa,#dce8f5)"><div class="a" style="left:4px;top:11px;width:7px;height:2px;background:#6d7f93"></div></div>
<div class="a" style="left:1402px;top:25px;width:18px;height:18px;border:1px solid #b5c8dd;background:linear-gradient(#eef3fa,#dce8f5)"><div class="a" style="left:8px;top:4px;width:7px;height:6px;border:2px solid #6d7f93;border-left-width:1px;border-bottom-width:1px"></div><div class="a" style="left:4px;top:8px;width:7px;height:6px;border:2px solid #6d7f93;border-width:2px 1px 1px 1px;background:#e4edf7"></div></div>
<div class="a" style="left:1421px;top:25px;width:18px;height:18px;border:1px solid #b5c8dd;background:linear-gradient(#eef3fa,#dce8f5)"><svg width="18" height="18" style="position:absolute;left:0;top:0"><path d="M5 5l7 7M12 5l-7 7" stroke="#6d7f93" stroke-width="2"/></svg></div>
<svg class="a" style="left:0;top:0" width="1440" height="150" shape-rendering="crispEdges"><path d="M401 123h5l-2.5-3zM535 123h5l-2.5-3z" fill="#000"/><path d="M401 130h5l-2.5 3zM535 130h5l-2.5 3z" fill="#000"/></svg>
</body></html>
